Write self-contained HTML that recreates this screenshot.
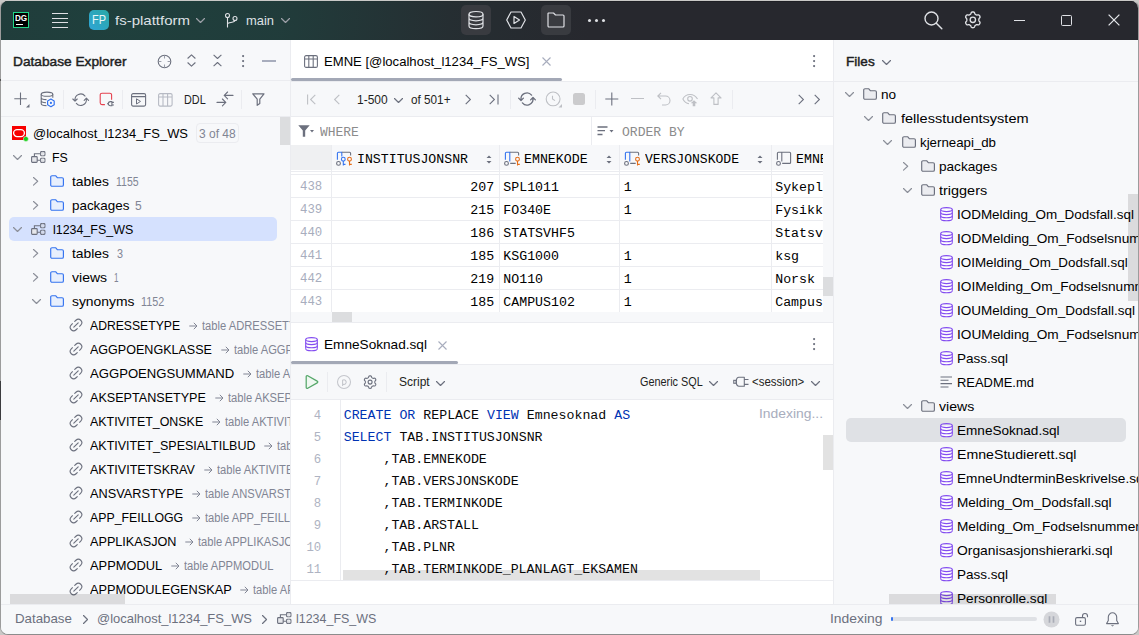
<!DOCTYPE html>
<html><head><meta charset="utf-8"><style>
html,body{margin:0;padding:0;width:1139px;height:635px;overflow:hidden;background:#c9c9c7;}
#root{position:relative;width:1139px;height:635px;overflow:hidden;}

</style></head><body><div id="root">
<div style="position:absolute;left:0;top:0;width:1139px;height:635px;box-sizing:border-box;border:1px solid #9c9c9c;border-top-color:#c9c9c7;border-bottom-color:#8c8c8c;border-radius:8px;background:#F7F8FA;overflow:hidden">
</div>
<div style="position:absolute;left:1px;top:1px;width:1137px;height:633px;border-radius:7px;overflow:hidden">
<div style="position:absolute;left:-1px;top:-1px;width:1139px;height:635px">
<div style="position:absolute;left:0px;top:0px;width:1139px;height:40px;background:#27282E;"></div>
<div style="position:absolute;left:0px;top:1px;width:1139px;height:1px;background:#1F2025;"></div>
<div style="position:absolute;left:0px;top:0px;width:1139px;height:40px;background:radial-gradient(ellipse 470px 260px at 120px 20px, rgba(31,64,61,1) 0%, rgba(32,62,60,0.9) 35%, rgba(36,52,54,0.5) 70%, rgba(39,40,46,0) 100%);"></div>
<div style="position:absolute;left:13px;top:12px;width:16px;height:16px;background:#000;box-sizing:border-box;border:1.5px solid #21D789"></div>
<span style='position:absolute;left:15.3px;top:14.02px;font-family:"Liberation Sans", sans-serif;font-size:8.6px;line-height:8.6px;font-weight:bold;white-space:pre;color:#fff;transform:scaleX(0.9464);transform-origin:0 0;'>DG</span>
<div style="position:absolute;left:16px;top:24px;width:6.5px;height:1.3px;background:#fff;"></div>
<div style="position:absolute;left:52px;top:13px;width:16px;height:1.3px;background:#DFE1E5;"></div>
<div style="position:absolute;left:52px;top:17.5px;width:16px;height:1.3px;background:#DFE1E5;"></div>
<div style="position:absolute;left:52px;top:22px;width:16px;height:1.3px;background:#DFE1E5;"></div>
<div style="position:absolute;left:52px;top:26.5px;width:16px;height:1.3px;background:#DFE1E5;"></div>
<div style="position:absolute;left:89px;top:10px;width:20px;height:20px;background:linear-gradient(45deg,#2fa5d6 0%,#29a8a6 100%);border-radius:5px"></div>
<span style='position:absolute;left:92px;top:14.16px;font-family:"Liberation Sans", sans-serif;font-size:12.8px;line-height:12.8px;font-weight:normal;white-space:pre;color:#EAF7F7;transform:scaleX(0.8558);transform-origin:0 0;'>FP</span>
<span style='position:absolute;left:115px;top:13.57px;font-family:"Liberation Sans", sans-serif;font-size:13.5px;line-height:13.5px;font-weight:normal;white-space:pre;color:#DFE1E5;transform:scaleX(1.1109);transform-origin:0 0;'>fs-plattform</span>
<svg style="position:absolute;left:196px;top:18px;overflow:visible;" width="9" height="5" viewBox="0 0 9 5" fill="none"><path d="M0.5 0.5 L4.5 4.5 L8.5 0.5" stroke="#9DA0A8" stroke-width="1.15" stroke-linecap="round" stroke-linejoin="round"/></svg>
<svg style="position:absolute;left:225px;top:13px;overflow:visible;" width="13" height="15" viewBox="0 0 13 15" fill="none"><circle cx="2.5" cy="2.5" r="2" stroke="#DFE1E5" stroke-width="1.1"/><circle cx="10" cy="5.5" r="2" stroke="#DFE1E5" stroke-width="1.1"/><path d="M2.5 4.5 V14.5 M2.5 11 C2.5 9 10 10 10 7.5" stroke="#DFE1E5" stroke-width="1.1"/></svg>
<span style='position:absolute;left:246px;top:13.57px;font-family:"Liberation Sans", sans-serif;font-size:13.5px;line-height:13.5px;font-weight:normal;white-space:pre;color:#DFE1E5;transform:scaleX(0.9568);transform-origin:0 0;'>main</span>
<svg style="position:absolute;left:281px;top:18px;overflow:visible;" width="9" height="5" viewBox="0 0 9 5" fill="none"><path d="M0.5 0.5 L4.5 4.5 L8.5 0.5" stroke="#9DA0A8" stroke-width="1.15" stroke-linecap="round" stroke-linejoin="round"/></svg>
<div style="position:absolute;left:461px;top:5px;width:30px;height:30px;background:#393B40;border-radius:5px"></div>
<div style="position:absolute;left:541px;top:5px;width:30px;height:30px;background:#393B40;border-radius:5px"></div>
<svg style="position:absolute;left:468px;top:11px;overflow:visible;" width="16" height="19" viewBox="0 0 16 19" fill="none"><ellipse cx="8" cy="3.2" rx="7" ry="2.7" stroke="#DFE1E5" stroke-width="1.2"/><path d="M1 3.2 V15 c0 1.5 3.1 2.7 7 2.7 s7 -1.2 7 -2.7 V3.2 M1 7.1 c0 1.5 3.1 2.7 7 2.7 s7 -1.2 7 -2.7 M1 11.1 c0 1.5 3.1 2.7 7 2.7 s7 -1.2 7 -2.7" stroke="#DFE1E5" stroke-width="1.2"/></svg>
<svg style="position:absolute;left:506px;top:11px;overflow:visible;" width="20" height="18" viewBox="0 0 20 18" fill="none"><path d="M5 1 H15 L19.3 9 L15 17 H5 L0.7 9 Z" stroke="#DFE1E5" stroke-width="1.2" stroke-linejoin="round"/><path d="M8 5.5 V12.5 L13.5 9 Z" stroke="#DFE1E5" stroke-width="1.2" stroke-linejoin="round"/></svg>
<svg style="position:absolute;left:547px;top:12px;overflow:visible;" width="18" height="16" viewBox="0 0 18 16" fill="none"><path d="M1.5 1 H6.5 L8.5 3 H16 a1 1 0 0 1 1 1 V14 a1 1 0 0 1 -1 1 H2 a1 1 0 0 1 -1 -1 V1.5z" stroke="#DFE1E5" stroke-width="1.2" stroke-linejoin="round"/></svg>
<svg style="position:absolute;left:587.5px;top:18.5px;overflow:visible;" width="3" height="3" viewBox="0 0 3 3" fill="none"><circle cx="1.5" cy="1.5" r="1.5" fill="#DFE1E5"/></svg>
<svg style="position:absolute;left:594.5px;top:18.5px;overflow:visible;" width="3" height="3" viewBox="0 0 3 3" fill="none"><circle cx="1.5" cy="1.5" r="1.5" fill="#DFE1E5"/></svg>
<svg style="position:absolute;left:601.5px;top:18.5px;overflow:visible;" width="3" height="3" viewBox="0 0 3 3" fill="none"><circle cx="1.5" cy="1.5" r="1.5" fill="#DFE1E5"/></svg>
<svg style="position:absolute;left:924px;top:11px;overflow:visible;" width="19" height="19" viewBox="0 0 19 19" fill="none"><circle cx="7.5" cy="7.5" r="6.5" stroke="#DFE1E5" stroke-width="1.4"/><path d="M12.3 12.3 L17.8 17.8" stroke="#DFE1E5" stroke-width="1.5" stroke-linecap="round"/></svg>
<svg style="position:absolute;left:962.15px;top:9.35px;overflow:visible;" width="21.7" height="21.7" viewBox="0 0 21.7 21.7" fill="none"><path d="M16.85 10.85 L16.87 11.24 L16.93 11.65 L17.06 12.09 L17.56 12.65 L18.02 13.28 L18.02 13.82 L17.91 14.33 L17.69 14.80 L17.39 15.22 L17.01 15.58 L16.54 15.84 L15.76 15.76 L15.03 15.61 L14.59 15.72 L14.20 15.87 L13.85 16.05 L13.52 16.26 L13.20 16.52 L12.89 16.85 L12.65 17.56 L12.33 18.27 L11.86 18.55 L11.36 18.70 L10.85 18.75 L10.34 18.70 L9.84 18.55 L9.37 18.27 L9.05 17.56 L8.81 16.85 L8.50 16.52 L8.18 16.26 L7.85 16.05 L7.50 15.87 L7.11 15.72 L6.67 15.61 L5.94 15.76 L5.16 15.84 L4.69 15.58 L4.31 15.22 L4.01 14.80 L3.79 14.33 L3.68 13.82 L3.68 13.28 L4.14 12.65 L4.64 12.09 L4.77 11.65 L4.83 11.24 L4.85 10.85 L4.83 10.46 L4.77 10.05 L4.64 9.61 L4.14 9.05 L3.68 8.42 L3.68 7.88 L3.79 7.37 L4.01 6.90 L4.31 6.48 L4.69 6.12 L5.16 5.86 L5.94 5.94 L6.67 6.09 L7.11 5.98 L7.50 5.83 L7.85 5.65 L8.18 5.44 L8.50 5.18 L8.81 4.85 L9.05 4.14 L9.37 3.43 L9.84 3.15 L10.34 3.00 L10.85 2.95 L11.36 3.00 L11.86 3.15 L12.33 3.43 L12.65 4.14 L12.89 4.85 L13.20 5.18 L13.52 5.44 L13.85 5.65 L14.20 5.83 L14.59 5.98 L15.03 6.09 L15.76 5.94 L16.54 5.86 L17.01 6.12 L17.39 6.48 L17.69 6.90 L17.91 7.37 L18.02 7.88 L18.02 8.42 L17.56 9.05 L17.06 9.61 L16.93 10.05 L16.87 10.46Z" stroke="#DFE1E5" stroke-width="1.35" stroke-linejoin="round"/><circle cx="10.85" cy="10.85" r="2.7" stroke="#DFE1E5" stroke-width="1.35"/></svg>
<div style="position:absolute;left:1014px;top:19.5px;width:11px;height:1.2px;background:#DFE1E5;"></div>
<div style="position:absolute;left:1061px;top:14.5px;width:11px;height:11px;background:transparent;box-sizing:border-box;border:1.3px solid #DFE1E5;border-radius:1.5px"></div>
<svg style="position:absolute;left:1108px;top:14px;overflow:visible;" width="12" height="12" viewBox="0 0 12 12" fill="none"><path d="M0.6 0.6 L11.4 11.4 M11.4 0.6 L0.6 11.4" stroke="#DFE1E5" stroke-width="1.3"/></svg>
<div style="position:absolute;left:0px;top:40px;width:290px;height:564px;background:#F7F8FA;"></div>
<div style="position:absolute;left:290px;top:40px;width:1px;height:564px;background:#EBECF0;"></div>
<span style='position:absolute;left:13px;top:54.99px;font-family:"Liberation Sans", sans-serif;font-size:13px;line-height:13px;font-weight:normal;white-space:pre;color:#1E1F22;transform:scaleX(1.0541);transform-origin:0 0;-webkit-text-stroke:0.45px #1E1F22'>Database Explorer</span>
<svg style="position:absolute;left:157px;top:54px;overflow:visible;" width="15" height="15" viewBox="0 0 15 15" fill="none"><circle cx="7.5" cy="7.5" r="6.3" stroke="#6C707E" stroke-width="1.1"/><path d="M7.5 1.8 V4.4 M7.5 10.6 V13.2 M1.8 7.5 H4.4 M10.6 7.5 H13.2" stroke="#9A9EAA" stroke-width="1.1"/></svg>
<svg style="position:absolute;left:187px;top:54px;overflow:visible;" width="9" height="13" viewBox="0 0 9 13" fill="none"><path d="M0.6 4.5 L4.5 0.8 L8.4 4.5 M0.6 8.5 L4.5 12.2 L8.4 8.5" stroke="#6C707E" stroke-width="1.1" stroke-linejoin="round"/></svg>
<svg style="position:absolute;left:213px;top:54px;overflow:visible;" width="9" height="13" viewBox="0 0 9 13" fill="none"><path d="M0.6 0.8 L4.5 4.5 L8.4 0.8 M0.6 12.2 L4.5 8.5 L8.4 12.2" stroke="#6C707E" stroke-width="1.1" stroke-linejoin="round"/></svg>
<svg style="position:absolute;left:241.5px;top:55px;overflow:visible;" width="2.2" height="2.2" viewBox="0 0 2.2 2.2" fill="none"><circle cx="1.1" cy="1.1" r="1.1" fill="#6C707E"/></svg>
<svg style="position:absolute;left:241.5px;top:60px;overflow:visible;" width="2.2" height="2.2" viewBox="0 0 2.2 2.2" fill="none"><circle cx="1.1" cy="1.1" r="1.1" fill="#6C707E"/></svg>
<svg style="position:absolute;left:241.5px;top:65px;overflow:visible;" width="2.2" height="2.2" viewBox="0 0 2.2 2.2" fill="none"><circle cx="1.1" cy="1.1" r="1.1" fill="#6C707E"/></svg>
<div style="position:absolute;left:262px;top:60.2px;width:13.5px;height:1.5px;background:#A8ADBD;"></div>
<div style="position:absolute;left:0px;top:80px;width:290px;height:1px;background:#EBECF0;"></div>
<svg style="position:absolute;left:14px;top:92px;overflow:visible;" width="16" height="16" viewBox="0 0 16 16" fill="none"><path d="M6.5 0.5 V13 M0.3 6.7 H12.8" stroke="#6C707E" stroke-width="1.1"/><path d="M15.5 12 V15.5 H12 Z" fill="#6C707E"/></svg>
<svg style="position:absolute;left:40px;top:91px;overflow:visible;" width="16" height="16" viewBox="0 0 16 16" fill="none"><ellipse cx="7" cy="3.2" rx="5.8" ry="2.1" stroke="#6C707E" stroke-width="1.1"/><path d="M1.2 3.2 V12.4 c0 1.2 2.4 2.1 5.3 2.2 M12.8 3.2 V6.8 M1.2 6.4 c0 1.2 2.4 2.1 5.3 2.2 M1.2 9.5 c0 1.2 2.4 2.1 4.8 2.2" stroke="#6C707E" stroke-width="1.1"/><path d="M10.9 8.1 L14.2 10 V13.8 L10.9 15.7 L7.6 13.8 V10 Z" fill="#F7F8FA" stroke="#3574F0" stroke-width="1.2" stroke-linejoin="round"/><circle cx="10.9" cy="11.9" r="1.1" fill="#3574F0"/></svg>
<div style="position:absolute;left:63px;top:90px;width:1px;height:19px;background:#EBECF0;"></div>
<svg style="position:absolute;left:70.5px;top:89.5px;overflow:visible;" width="19.4" height="19.4" viewBox="0 0 19.4 19.4" fill="none"><path d="M4.02 10.20 A5.7 5.7 0 0 1 14.07 6.04 M15.38 9.20 A5.7 5.7 0 0 1 5.33 13.36 M1.82 9.00 L4.02 11.20 L6.22 9.00 M13.18 10.40 L15.38 8.20 L17.58 10.40" stroke="#6C707E" stroke-width="1.1" stroke-linecap="round" stroke-linejoin="round"/></svg>
<svg style="position:absolute;left:99px;top:92px;overflow:visible;" width="17" height="16" viewBox="0 0 17 16" fill="none"><path d="M12.6 7.8 V3 a1.8 1.8 0 0 0 -1.8 -1.8 H3 a1.8 1.8 0 0 0 -1.8 1.8 V10.8 a1.8 1.8 0 0 0 1.8 1.8 H5.9" stroke="#E5414F" stroke-width="1.1"/><path d="M12.9 9.6 H11.4 a2.1 2.1 0 0 0 0 4.2 H12.9 Z M8 11.7 H9.3 M12.9 10.4 H14.9 M12.9 13 H14.9" stroke="#6C707E" stroke-width="1.1" stroke-linejoin="round"/></svg>
<div style="position:absolute;left:122px;top:90px;width:1px;height:19px;background:#EBECF0;"></div>
<svg style="position:absolute;left:131px;top:93px;overflow:visible;" width="16" height="14" viewBox="0 0 16 14" fill="none"><rect x="0.6" y="0.6" width="14" height="12.5" rx="1.5" stroke="#6C707E" stroke-width="1.1"/><path d="M0.6 3.6 H14.6" stroke="#6C707E" stroke-width="1.1"/><path d="M5.5 5.8 V11 L9.5 8.4 Z" stroke="#6C707E" stroke-width="1" stroke-linejoin="round"/></svg>
<svg style="position:absolute;left:158px;top:93px;overflow:visible;" width="15" height="14" viewBox="0 0 15 14" fill="none"><rect x="0.6" y="0.6" width="13.5" height="12.5" rx="1.5" stroke="#B7BAC4" stroke-width="1.1"/><path d="M0.6 4 H14 M5 0.6 V13 M9.6 0.6 V13" stroke="#B7BAC4" stroke-width="1.1"/></svg>
<span style='position:absolute;left:184px;top:93.92px;font-family:"Liberation Sans", sans-serif;font-size:12.5px;line-height:12.5px;font-weight:normal;white-space:pre;color:#1E1F22;transform:scaleX(0.8675);transform-origin:0 0;'>DDL</span>
<svg style="position:absolute;left:216px;top:91px;overflow:visible;" width="18" height="16" viewBox="0 0 18 16" fill="none"><path d="M8.2 4.4 H17 M11.6 1 L8.2 4.4 L11.6 7.8 M1 11.4 H9.8 M6.4 8 L9.8 11.4 L6.4 14.8" stroke="#6C707E" stroke-width="1.1" stroke-linecap="round" stroke-linejoin="round"/></svg>
<div style="position:absolute;left:241px;top:90px;width:1px;height:19px;background:#EBECF0;"></div>
<svg style="position:absolute;left:251.5px;top:92.5px;overflow:visible;" width="13" height="13" viewBox="0 0 13 13" fill="none"><path d="M0.8 0.8 H12 L7.8 6.2 V10.5 L5.2 12.3 V6.2 Z" stroke="#6C707E" stroke-width="1.2" stroke-linejoin="round"/></svg>
<div style="position:absolute;left:0px;top:116px;width:290px;height:1px;background:#EBECF0;"></div>
<div style="position:absolute;left:0;top:0;width:1139px;height:635px;clip-path:inset(117px 849px 31px 0px)">
<div style="position:absolute;left:280px;top:117px;width:10px;height:28px;background:#DCDDDF;"></div>
<div style="position:absolute;left:12px;top:126px;width:14px;height:14px;background:#F80000;"></div>
<svg style="position:absolute;left:12px;top:126px;overflow:visible;" width="14" height="14" viewBox="0 0 14 14" fill="none"><rect x="1.6" y="3.6" width="10.8" height="7" rx="3.5" stroke="#fff" stroke-width="1.3"/></svg>
<svg style="position:absolute;left:22.5px;top:136.2px;overflow:visible;" width="6" height="6" viewBox="0 0 6 6" fill="none"><circle cx="2.9" cy="2.9" r="2.5" fill="#19CF19" stroke="#F7F8FA" stroke-width="0.5"/></svg>
<span style='position:absolute;left:33px;top:126.99px;font-family:"Liberation Sans", sans-serif;font-size:13px;line-height:13px;font-weight:normal;white-space:pre;color:#000000;transform:scaleX(0.9964);transform-origin:0 0;'>@localhost_l1234_FS_WS</span>
<div style="position:absolute;left:196px;top:123px;width:43px;height:20px;background:transparent;box-sizing:border-box;border:1px solid #EBECF0;border-radius:4px"></div>
<span style='position:absolute;left:198.6px;top:128.02px;font-family:"Liberation Sans", sans-serif;font-size:12.5px;line-height:12.5px;font-weight:normal;white-space:pre;color:#818594;transform:scaleX(0.9599);transform-origin:0 0;'>3 of 48</span>
<svg style="position:absolute;left:13px;top:154.8px;overflow:visible;" width="9" height="5" viewBox="0 0 9 5" fill="none"><path d="M0.5 0.5 L4.5 4.5 L8.5 0.5" stroke="#8C8F99" stroke-width="1.15" stroke-linecap="round" stroke-linejoin="round"/></svg>
<svg style="position:absolute;left:31px;top:151px;overflow:visible;" width="15" height="13" viewBox="0 0 15 13" fill="none"><rect x="0.6" y="5.6" width="5.6" height="5.8" rx="0.8" fill="#E6E7EB" stroke="#6C707E" stroke-width="1.1"/><rect x="9.6" y="0.6" width="4.3" height="4.2" rx="0.8" stroke="#6C707E" stroke-width="1.1"/><rect x="9.6" y="7.2" width="4.3" height="4.2" rx="0.8" stroke="#6C707E" stroke-width="1.1"/><path d="M11.75 0.6 V4.8 M9.6 2.7 H13.9 M11.75 7.2 V11.4 M9.6 9.3 H13.9" stroke="#D5D7DD" stroke-width="0.6"/><path d="M3.4 5.6 V2.7 H9.6 M6.2 9.3 H9.6" stroke="#6C707E" stroke-width="1.1"/></svg>
<span style='position:absolute;left:52px;top:150.99px;font-family:"Liberation Sans", sans-serif;font-size:13px;line-height:13px;font-weight:normal;white-space:pre;color:#000000;transform:scaleX(0.9504);transform-origin:0 0;'>FS</span>
<svg style="position:absolute;left:33.2px;top:176.6px;overflow:visible;" width="5.2" height="8.6" viewBox="0 0 5.2 8.6" fill="none"><path d="M0.5 0.5 L4.7 4.3 L0.5 8.1" stroke="#8C8F99" stroke-width="1.15" stroke-linecap="round" stroke-linejoin="round"/></svg>
<svg style="position:absolute;left:50px;top:175px;overflow:visible;" width="15" height="13" viewBox="0 0 15 13" fill="none"><path d="M0.7 2 a1.3 1.3 0 0 1 1.3 -1.3 H5.6 L7.3 2.7 H12.1 a1.3 1.3 0 0 1 1.3 1.3 V9.9 a1.3 1.3 0 0 1 -1.3 1.3 H2 a1.3 1.3 0 0 1 -1.3 -1.3 Z" fill="#E7EFFD" stroke="#3574F0" stroke-width="1.15" stroke-linejoin="round"/></svg>
<span style='position:absolute;left:71.6px;top:174.99px;font-family:"Liberation Sans", sans-serif;font-size:13px;line-height:13px;font-weight:normal;white-space:pre;color:#000000;transform:scaleX(1.0662);transform-origin:0 0;'>tables</span>
<span style='position:absolute;left:116.4px;top:176.22px;font-family:"Liberation Sans", sans-serif;font-size:12.5px;line-height:12.5px;font-weight:normal;white-space:pre;color:#818594;transform:scaleX(0.8404);transform-origin:0 0;'>1155</span>
<svg style="position:absolute;left:33.2px;top:200.6px;overflow:visible;" width="5.2" height="8.6" viewBox="0 0 5.2 8.6" fill="none"><path d="M0.5 0.5 L4.7 4.3 L0.5 8.1" stroke="#8C8F99" stroke-width="1.15" stroke-linecap="round" stroke-linejoin="round"/></svg>
<svg style="position:absolute;left:50px;top:199px;overflow:visible;" width="15" height="13" viewBox="0 0 15 13" fill="none"><path d="M0.7 2 a1.3 1.3 0 0 1 1.3 -1.3 H5.6 L7.3 2.7 H12.1 a1.3 1.3 0 0 1 1.3 1.3 V9.9 a1.3 1.3 0 0 1 -1.3 1.3 H2 a1.3 1.3 0 0 1 -1.3 -1.3 Z" fill="#E7EFFD" stroke="#3574F0" stroke-width="1.15" stroke-linejoin="round"/></svg>
<span style='position:absolute;left:71.6px;top:198.99px;font-family:"Liberation Sans", sans-serif;font-size:13px;line-height:13px;font-weight:normal;white-space:pre;color:#000000;transform:scaleX(1.0313);transform-origin:0 0;'>packages</span>
<span style='position:absolute;left:134.8px;top:200.22px;font-family:"Liberation Sans", sans-serif;font-size:12.5px;line-height:12.5px;font-weight:normal;white-space:pre;color:#818594;transform:scaleX(0.9636);transform-origin:0 0;'>5</span>
<div style="position:absolute;left:9px;top:217px;width:268px;height:24px;background:#D5E1FE;border-radius:5px"></div>
<svg style="position:absolute;left:13px;top:226.8px;overflow:visible;" width="9" height="5" viewBox="0 0 9 5" fill="none"><path d="M0.5 0.5 L4.5 4.5 L8.5 0.5" stroke="#8C8F99" stroke-width="1.15" stroke-linecap="round" stroke-linejoin="round"/></svg>
<svg style="position:absolute;left:31px;top:223px;overflow:visible;" width="15" height="13" viewBox="0 0 15 13" fill="none"><rect x="0.6" y="5.6" width="5.6" height="5.8" rx="0.8" fill="#E6E7EB" stroke="#6C707E" stroke-width="1.1"/><rect x="9.6" y="0.6" width="4.3" height="4.2" rx="0.8" stroke="#6C707E" stroke-width="1.1"/><rect x="9.6" y="7.2" width="4.3" height="4.2" rx="0.8" stroke="#6C707E" stroke-width="1.1"/><path d="M11.75 0.6 V4.8 M9.6 2.7 H13.9 M11.75 7.2 V11.4 M9.6 9.3 H13.9" stroke="#D5D7DD" stroke-width="0.6"/><path d="M3.4 5.6 V2.7 H9.6 M6.2 9.3 H9.6" stroke="#6C707E" stroke-width="1.1"/></svg>
<span style='position:absolute;left:52.8px;top:222.99px;font-family:"Liberation Sans", sans-serif;font-size:13px;line-height:13px;font-weight:normal;white-space:pre;color:#000000;transform:scaleX(0.9567);transform-origin:0 0;'>l1234_FS_WS</span>
<svg style="position:absolute;left:33.2px;top:248.6px;overflow:visible;" width="5.2" height="8.6" viewBox="0 0 5.2 8.6" fill="none"><path d="M0.5 0.5 L4.7 4.3 L0.5 8.1" stroke="#8C8F99" stroke-width="1.15" stroke-linecap="round" stroke-linejoin="round"/></svg>
<svg style="position:absolute;left:50px;top:247px;overflow:visible;" width="15" height="13" viewBox="0 0 15 13" fill="none"><path d="M0.7 2 a1.3 1.3 0 0 1 1.3 -1.3 H5.6 L7.3 2.7 H12.1 a1.3 1.3 0 0 1 1.3 1.3 V9.9 a1.3 1.3 0 0 1 -1.3 1.3 H2 a1.3 1.3 0 0 1 -1.3 -1.3 Z" fill="#E7EFFD" stroke="#3574F0" stroke-width="1.15" stroke-linejoin="round"/></svg>
<span style='position:absolute;left:71.6px;top:246.99px;font-family:"Liberation Sans", sans-serif;font-size:13px;line-height:13px;font-weight:normal;white-space:pre;color:#000000;transform:scaleX(1.0662);transform-origin:0 0;'>tables</span>
<span style='position:absolute;left:116.6px;top:248.22px;font-family:"Liberation Sans", sans-serif;font-size:12.5px;line-height:12.5px;font-weight:normal;white-space:pre;color:#818594;transform:scaleX(0.8629);transform-origin:0 0;'>3</span>
<svg style="position:absolute;left:33.2px;top:272.6px;overflow:visible;" width="5.2" height="8.6" viewBox="0 0 5.2 8.6" fill="none"><path d="M0.5 0.5 L4.7 4.3 L0.5 8.1" stroke="#8C8F99" stroke-width="1.15" stroke-linecap="round" stroke-linejoin="round"/></svg>
<svg style="position:absolute;left:50px;top:271px;overflow:visible;" width="15" height="13" viewBox="0 0 15 13" fill="none"><path d="M0.7 2 a1.3 1.3 0 0 1 1.3 -1.3 H5.6 L7.3 2.7 H12.1 a1.3 1.3 0 0 1 1.3 1.3 V9.9 a1.3 1.3 0 0 1 -1.3 1.3 H2 a1.3 1.3 0 0 1 -1.3 -1.3 Z" fill="#E7EFFD" stroke="#3574F0" stroke-width="1.15" stroke-linejoin="round"/></svg>
<span style='position:absolute;left:71.6px;top:270.99px;font-family:"Liberation Sans", sans-serif;font-size:13px;line-height:13px;font-weight:normal;white-space:pre;color:#000000;transform:scaleX(1.0795);transform-origin:0 0;'>views</span>
<span style='position:absolute;left:114px;top:272.22px;font-family:"Liberation Sans", sans-serif;font-size:12.5px;line-height:12.5px;font-weight:normal;white-space:pre;color:#818594;transform:scaleX(0.6472);transform-origin:0 0;'>1</span>
<svg style="position:absolute;left:32.4px;top:298.5px;overflow:visible;" width="9" height="5" viewBox="0 0 9 5" fill="none"><path d="M0.5 0.5 L4.5 4.5 L8.5 0.5" stroke="#8C8F99" stroke-width="1.15" stroke-linecap="round" stroke-linejoin="round"/></svg>
<svg style="position:absolute;left:50px;top:295px;overflow:visible;" width="15" height="13" viewBox="0 0 15 13" fill="none"><path d="M0.7 2 a1.3 1.3 0 0 1 1.3 -1.3 H5.6 L7.3 2.7 H12.1 a1.3 1.3 0 0 1 1.3 1.3 V9.9 a1.3 1.3 0 0 1 -1.3 1.3 H2 a1.3 1.3 0 0 1 -1.3 -1.3 Z" fill="#E7EFFD" stroke="#3574F0" stroke-width="1.15" stroke-linejoin="round"/></svg>
<span style='position:absolute;left:71.6px;top:294.99px;font-family:"Liberation Sans", sans-serif;font-size:13px;line-height:13px;font-weight:normal;white-space:pre;color:#000000;transform:scaleX(1.0661);transform-origin:0 0;'>synonyms</span>
<span style='position:absolute;left:141.1px;top:296.22px;font-family:"Liberation Sans", sans-serif;font-size:12.5px;line-height:12.5px;font-weight:normal;white-space:pre;color:#818594;transform:scaleX(0.8628);transform-origin:0 0;'>1152</span>
<svg style="position:absolute;left:67.05px;top:316.1px;overflow:visible;" width="18" height="18" viewBox="0 0 18 18" fill="none"><g transform="translate(9 9) rotate(-45)"><path d="M1.6 -3.4 H3.3 A3.4 3.4 0 0 1 3.3 3.4 H1.6 M-1.6 3.4 H-3.3 A3.4 3.4 0 0 1 -3.3 -3.4 H-1.6 M-3.1 0 H3.1" stroke="#6C707E" stroke-width="1.1" stroke-linecap="round"/></g></svg>
<span style='position:absolute;left:90.2px;top:318.99px;font-family:"Liberation Sans", sans-serif;font-size:13px;line-height:13px;font-weight:normal;white-space:pre;color:#000000;transform:scaleX(0.9376);transform-origin:0 0;'>ADRESSETYPE</span>
<svg style="position:absolute;left:189.1px;top:321.5px;overflow:visible;" width="9" height="8" viewBox="0 0 9 8" fill="none"><path d="M0.3 4 H8 M4.8 0.8 L8 4 L4.8 7.2" stroke="#818594" stroke-width="1"/></svg>
<span style='position:absolute;left:202.3px;top:319.84px;font-family:"Liberation Sans", sans-serif;font-size:12px;line-height:12px;font-weight:normal;white-space:pre;color:#818594;transform:scaleX(0.931);transform-origin:0 0;'>table ADRESSETYPE</span>
<svg style="position:absolute;left:67.05px;top:340.1px;overflow:visible;" width="18" height="18" viewBox="0 0 18 18" fill="none"><g transform="translate(9 9) rotate(-45)"><path d="M1.6 -3.4 H3.3 A3.4 3.4 0 0 1 3.3 3.4 H1.6 M-1.6 3.4 H-3.3 A3.4 3.4 0 0 1 -3.3 -3.4 H-1.6 M-3.1 0 H3.1" stroke="#6C707E" stroke-width="1.1" stroke-linecap="round"/></g></svg>
<span style='position:absolute;left:90.2px;top:342.99px;font-family:"Liberation Sans", sans-serif;font-size:13px;line-height:13px;font-weight:normal;white-space:pre;color:#000000;transform:scaleX(0.9641);transform-origin:0 0;'>AGGPOENGKLASSE</span>
<svg style="position:absolute;left:221.2px;top:345.5px;overflow:visible;" width="9" height="8" viewBox="0 0 9 8" fill="none"><path d="M0.3 4 H8 M4.8 0.8 L8 4 L4.8 7.2" stroke="#818594" stroke-width="1"/></svg>
<span style='position:absolute;left:233.9px;top:343.84px;font-family:"Liberation Sans", sans-serif;font-size:12px;line-height:12px;font-weight:normal;white-space:pre;color:#818594;transform:scaleX(0.931);transform-origin:0 0;'>table AGGPOENGKLASSE</span>
<svg style="position:absolute;left:67.05px;top:364.1px;overflow:visible;" width="18" height="18" viewBox="0 0 18 18" fill="none"><g transform="translate(9 9) rotate(-45)"><path d="M1.6 -3.4 H3.3 A3.4 3.4 0 0 1 3.3 3.4 H1.6 M-1.6 3.4 H-3.3 A3.4 3.4 0 0 1 -3.3 -3.4 H-1.6 M-3.1 0 H3.1" stroke="#6C707E" stroke-width="1.1" stroke-linecap="round"/></g></svg>
<span style='position:absolute;left:90.2px;top:366.99px;font-family:"Liberation Sans", sans-serif;font-size:13px;line-height:13px;font-weight:normal;white-space:pre;color:#000000;transform:scaleX(1.0090);transform-origin:0 0;'>AGGPOENGSUMMAND</span>
<svg style="position:absolute;left:242.8px;top:369.5px;overflow:visible;" width="9" height="8" viewBox="0 0 9 8" fill="none"><path d="M0.3 4 H8 M4.8 0.8 L8 4 L4.8 7.2" stroke="#818594" stroke-width="1"/></svg>
<span style='position:absolute;left:256px;top:367.84px;font-family:"Liberation Sans", sans-serif;font-size:12px;line-height:12px;font-weight:normal;white-space:pre;color:#818594;transform:scaleX(0.931);transform-origin:0 0;'>table AGGPOENGSUMMAND</span>
<svg style="position:absolute;left:67.05px;top:388.1px;overflow:visible;" width="18" height="18" viewBox="0 0 18 18" fill="none"><g transform="translate(9 9) rotate(-45)"><path d="M1.6 -3.4 H3.3 A3.4 3.4 0 0 1 3.3 3.4 H1.6 M-1.6 3.4 H-3.3 A3.4 3.4 0 0 1 -3.3 -3.4 H-1.6 M-3.1 0 H3.1" stroke="#6C707E" stroke-width="1.1" stroke-linecap="round"/></g></svg>
<span style='position:absolute;left:90.2px;top:390.99px;font-family:"Liberation Sans", sans-serif;font-size:13px;line-height:13px;font-weight:normal;white-space:pre;color:#000000;transform:scaleX(0.9684);transform-origin:0 0;'>AKSEPTANSETYPE</span>
<svg style="position:absolute;left:214.6px;top:393.5px;overflow:visible;" width="9" height="8" viewBox="0 0 9 8" fill="none"><path d="M0.3 4 H8 M4.8 0.8 L8 4 L4.8 7.2" stroke="#818594" stroke-width="1"/></svg>
<span style='position:absolute;left:227.8px;top:391.84px;font-family:"Liberation Sans", sans-serif;font-size:12px;line-height:12px;font-weight:normal;white-space:pre;color:#818594;transform:scaleX(0.931);transform-origin:0 0;'>table AKSEPTANSETYPE</span>
<svg style="position:absolute;left:67.05px;top:412.1px;overflow:visible;" width="18" height="18" viewBox="0 0 18 18" fill="none"><g transform="translate(9 9) rotate(-45)"><path d="M1.6 -3.4 H3.3 A3.4 3.4 0 0 1 3.3 3.4 H1.6 M-1.6 3.4 H-3.3 A3.4 3.4 0 0 1 -3.3 -3.4 H-1.6 M-3.1 0 H3.1" stroke="#6C707E" stroke-width="1.1" stroke-linecap="round"/></g></svg>
<span style='position:absolute;left:90.2px;top:414.99px;font-family:"Liberation Sans", sans-serif;font-size:13px;line-height:13px;font-weight:normal;white-space:pre;color:#000000;transform:scaleX(0.9554);transform-origin:0 0;'>AKTIVITET_ONSKE</span>
<svg style="position:absolute;left:212px;top:417.5px;overflow:visible;" width="9" height="8" viewBox="0 0 9 8" fill="none"><path d="M0.3 4 H8 M4.8 0.8 L8 4 L4.8 7.2" stroke="#818594" stroke-width="1"/></svg>
<span style='position:absolute;left:225.2px;top:415.84px;font-family:"Liberation Sans", sans-serif;font-size:12px;line-height:12px;font-weight:normal;white-space:pre;color:#818594;transform:scaleX(0.931);transform-origin:0 0;'>table AKTIVITET_ONSKE</span>
<svg style="position:absolute;left:67.05px;top:436.1px;overflow:visible;" width="18" height="18" viewBox="0 0 18 18" fill="none"><g transform="translate(9 9) rotate(-45)"><path d="M1.6 -3.4 H3.3 A3.4 3.4 0 0 1 3.3 3.4 H1.6 M-1.6 3.4 H-3.3 A3.4 3.4 0 0 1 -3.3 -3.4 H-1.6 M-3.1 0 H3.1" stroke="#6C707E" stroke-width="1.1" stroke-linecap="round"/></g></svg>
<span style='position:absolute;left:90.2px;top:438.99px;font-family:"Liberation Sans", sans-serif;font-size:13px;line-height:13px;font-weight:normal;white-space:pre;color:#000000;transform:scaleX(0.9593);transform-origin:0 0;'>AKTIVITET_SPESIALTILBUD</span>
<svg style="position:absolute;left:264.2px;top:441.5px;overflow:visible;" width="9" height="8" viewBox="0 0 9 8" fill="none"><path d="M0.3 4 H8 M4.8 0.8 L8 4 L4.8 7.2" stroke="#818594" stroke-width="1"/></svg>
<span style='position:absolute;left:276.5px;top:439.84px;font-family:"Liberation Sans", sans-serif;font-size:12px;line-height:12px;font-weight:normal;white-space:pre;color:#818594;transform:scaleX(0.931);transform-origin:0 0;'>table AKTIVITET_SPESIALTILBUD</span>
<svg style="position:absolute;left:67.05px;top:460.1px;overflow:visible;" width="18" height="18" viewBox="0 0 18 18" fill="none"><g transform="translate(9 9) rotate(-45)"><path d="M1.6 -3.4 H3.3 A3.4 3.4 0 0 1 3.3 3.4 H1.6 M-1.6 3.4 H-3.3 A3.4 3.4 0 0 1 -3.3 -3.4 H-1.6 M-3.1 0 H3.1" stroke="#6C707E" stroke-width="1.1" stroke-linecap="round"/></g></svg>
<span style='position:absolute;left:90.2px;top:462.99px;font-family:"Liberation Sans", sans-serif;font-size:13px;line-height:13px;font-weight:normal;white-space:pre;color:#000000;transform:scaleX(0.9638);transform-origin:0 0;'>AKTIVITETSKRAV</span>
<svg style="position:absolute;left:203.9px;top:465.5px;overflow:visible;" width="9" height="8" viewBox="0 0 9 8" fill="none"><path d="M0.3 4 H8 M4.8 0.8 L8 4 L4.8 7.2" stroke="#818594" stroke-width="1"/></svg>
<span style='position:absolute;left:217px;top:463.84px;font-family:"Liberation Sans", sans-serif;font-size:12px;line-height:12px;font-weight:normal;white-space:pre;color:#818594;transform:scaleX(0.931);transform-origin:0 0;'>table AKTIVITETSKRAV</span>
<svg style="position:absolute;left:67.05px;top:484.1px;overflow:visible;" width="18" height="18" viewBox="0 0 18 18" fill="none"><g transform="translate(9 9) rotate(-45)"><path d="M1.6 -3.4 H3.3 A3.4 3.4 0 0 1 3.3 3.4 H1.6 M-1.6 3.4 H-3.3 A3.4 3.4 0 0 1 -3.3 -3.4 H-1.6 M-3.1 0 H3.1" stroke="#6C707E" stroke-width="1.1" stroke-linecap="round"/></g></svg>
<span style='position:absolute;left:90.2px;top:486.99px;font-family:"Liberation Sans", sans-serif;font-size:13px;line-height:13px;font-weight:normal;white-space:pre;color:#000000;transform:scaleX(0.9798);transform-origin:0 0;'>ANSVARSTYPE</span>
<svg style="position:absolute;left:192.3px;top:489.5px;overflow:visible;" width="9" height="8" viewBox="0 0 9 8" fill="none"><path d="M0.3 4 H8 M4.8 0.8 L8 4 L4.8 7.2" stroke="#818594" stroke-width="1"/></svg>
<span style='position:absolute;left:205.4px;top:487.84px;font-family:"Liberation Sans", sans-serif;font-size:12px;line-height:12px;font-weight:normal;white-space:pre;color:#818594;transform:scaleX(0.931);transform-origin:0 0;'>table ANSVARSTYPE</span>
<svg style="position:absolute;left:67.05px;top:508.1px;overflow:visible;" width="18" height="18" viewBox="0 0 18 18" fill="none"><g transform="translate(9 9) rotate(-45)"><path d="M1.6 -3.4 H3.3 A3.4 3.4 0 0 1 3.3 3.4 H1.6 M-1.6 3.4 H-3.3 A3.4 3.4 0 0 1 -3.3 -3.4 H-1.6 M-3.1 0 H3.1" stroke="#6C707E" stroke-width="1.1" stroke-linecap="round"/></g></svg>
<span style='position:absolute;left:90.2px;top:510.99px;font-family:"Liberation Sans", sans-serif;font-size:13px;line-height:13px;font-weight:normal;white-space:pre;color:#000000;transform:scaleX(0.9484);transform-origin:0 0;'>APP_FEILLOGG</span>
<svg style="position:absolute;left:192.3px;top:513.5px;overflow:visible;" width="9" height="8" viewBox="0 0 9 8" fill="none"><path d="M0.3 4 H8 M4.8 0.8 L8 4 L4.8 7.2" stroke="#818594" stroke-width="1"/></svg>
<span style='position:absolute;left:205.4px;top:511.84px;font-family:"Liberation Sans", sans-serif;font-size:12px;line-height:12px;font-weight:normal;white-space:pre;color:#818594;transform:scaleX(0.931);transform-origin:0 0;'>table APP_FEILLOGG</span>
<svg style="position:absolute;left:67.05px;top:532.1px;overflow:visible;" width="18" height="18" viewBox="0 0 18 18" fill="none"><g transform="translate(9 9) rotate(-45)"><path d="M1.6 -3.4 H3.3 A3.4 3.4 0 0 1 3.3 3.4 H1.6 M-1.6 3.4 H-3.3 A3.4 3.4 0 0 1 -3.3 -3.4 H-1.6 M-3.1 0 H3.1" stroke="#6C707E" stroke-width="1.1" stroke-linecap="round"/></g></svg>
<span style='position:absolute;left:90.2px;top:534.99px;font-family:"Liberation Sans", sans-serif;font-size:13px;line-height:13px;font-weight:normal;white-space:pre;color:#000000;transform:scaleX(0.9733);transform-origin:0 0;'>APPLIKASJON</span>
<svg style="position:absolute;left:185px;top:537.5px;overflow:visible;" width="9" height="8" viewBox="0 0 9 8" fill="none"><path d="M0.3 4 H8 M4.8 0.8 L8 4 L4.8 7.2" stroke="#818594" stroke-width="1"/></svg>
<span style='position:absolute;left:198px;top:535.84px;font-family:"Liberation Sans", sans-serif;font-size:12px;line-height:12px;font-weight:normal;white-space:pre;color:#818594;transform:scaleX(0.931);transform-origin:0 0;'>table APPLIKASJON</span>
<svg style="position:absolute;left:67.05px;top:556.1px;overflow:visible;" width="18" height="18" viewBox="0 0 18 18" fill="none"><g transform="translate(9 9) rotate(-45)"><path d="M1.6 -3.4 H3.3 A3.4 3.4 0 0 1 3.3 3.4 H1.6 M-1.6 3.4 H-3.3 A3.4 3.4 0 0 1 -3.3 -3.4 H-1.6 M-3.1 0 H3.1" stroke="#6C707E" stroke-width="1.1" stroke-linecap="round"/></g></svg>
<span style='position:absolute;left:90.2px;top:558.99px;font-family:"Liberation Sans", sans-serif;font-size:13px;line-height:13px;font-weight:normal;white-space:pre;color:#000000;transform:scaleX(0.9895);transform-origin:0 0;'>APPMODUL</span>
<svg style="position:absolute;left:171.3px;top:561.5px;overflow:visible;" width="9" height="8" viewBox="0 0 9 8" fill="none"><path d="M0.3 4 H8 M4.8 0.8 L8 4 L4.8 7.2" stroke="#818594" stroke-width="1"/></svg>
<span style='position:absolute;left:184.4px;top:559.84px;font-family:"Liberation Sans", sans-serif;font-size:12px;line-height:12px;font-weight:normal;white-space:pre;color:#818594;transform:scaleX(0.931);transform-origin:0 0;'>table APPMODUL</span>
<svg style="position:absolute;left:67.05px;top:580.1px;overflow:visible;" width="18" height="18" viewBox="0 0 18 18" fill="none"><g transform="translate(9 9) rotate(-45)"><path d="M1.6 -3.4 H3.3 A3.4 3.4 0 0 1 3.3 3.4 H1.6 M-1.6 3.4 H-3.3 A3.4 3.4 0 0 1 -3.3 -3.4 H-1.6 M-3.1 0 H3.1" stroke="#6C707E" stroke-width="1.1" stroke-linecap="round"/></g></svg>
<span style='position:absolute;left:90.2px;top:582.99px;font-family:"Liberation Sans", sans-serif;font-size:13px;line-height:13px;font-weight:normal;white-space:pre;color:#000000;transform:scaleX(0.9820);transform-origin:0 0;'>APPMODULEGENSKAP</span>
<svg style="position:absolute;left:240.3px;top:585.5px;overflow:visible;" width="9" height="8" viewBox="0 0 9 8" fill="none"><path d="M0.3 4 H8 M4.8 0.8 L8 4 L4.8 7.2" stroke="#818594" stroke-width="1"/></svg>
<span style='position:absolute;left:253.4px;top:583.84px;font-family:"Liberation Sans", sans-serif;font-size:12px;line-height:12px;font-weight:normal;white-space:pre;color:#818594;transform:scaleX(0.931);transform-origin:0 0;'>table APPMODULEGENSKAP</span>
<div style="position:absolute;left:10px;top:594px;width:115px;height:10px;background:rgba(0,0,0,0.115);"></div>
</div>
<div style="position:absolute;left:291px;top:40px;width:542px;height:564px;background:#FFFFFF;"></div>
<svg style="position:absolute;left:304px;top:55px;overflow:visible;" width="14" height="13" viewBox="0 0 14 13" fill="none"><rect x="0.6" y="0.6" width="12.8" height="11.8" rx="1.5" stroke="#6C707E" stroke-width="1.1"/><path d="M0.6 4 H13.4 M4.8 0.6 V12.4 M9.2 0.6 V12.4" stroke="#6C707E" stroke-width="1.1"/></svg>
<span style='position:absolute;left:324.2px;top:54.99px;font-family:"Liberation Sans", sans-serif;font-size:13px;line-height:13px;font-weight:normal;white-space:pre;color:#000000;transform:scaleX(1.0076);transform-origin:0 0;'>EMNE [@localhost_l1234_FS_WS]</span>
<svg style="position:absolute;left:542px;top:57px;overflow:visible;" width="9" height="9" viewBox="0 0 9 9" fill="none"><path d="M0.5 0.5 L8.5 8.5 M8.5 0.5 L0.5 8.5" stroke="#A8ADBD" stroke-width="1.1"/></svg>
<div style="position:absolute;left:291px;top:78px;width:271px;height:3px;background:#A3A8B6;border-radius:1.5px"></div>
<svg style="position:absolute;left:813px;top:55px;overflow:visible;" width="2.2" height="2.2" viewBox="0 0 2.2 2.2" fill="none"><circle cx="1.1" cy="1.1" r="1.1" fill="#6C707E"/></svg>
<svg style="position:absolute;left:813px;top:60px;overflow:visible;" width="2.2" height="2.2" viewBox="0 0 2.2 2.2" fill="none"><circle cx="1.1" cy="1.1" r="1.1" fill="#6C707E"/></svg>
<svg style="position:absolute;left:813px;top:65px;overflow:visible;" width="2.2" height="2.2" viewBox="0 0 2.2 2.2" fill="none"><circle cx="1.1" cy="1.1" r="1.1" fill="#6C707E"/></svg>
<div style="position:absolute;left:291px;top:81px;width:542px;height:1px;background:#EBECF0;"></div>
<div style="position:absolute;left:291px;top:82px;width:542px;height:34px;background:#F7F8FA;"></div>
<div style="position:absolute;left:291px;top:116px;width:542px;height:1px;background:#EBECF0;"></div>
<svg style="position:absolute;left:307px;top:94px;overflow:visible;" width="9" height="11" viewBox="0 0 9 11" fill="none"><path d="M0.6 0.5 V10.5 M8.3 0.8 L3.6 5.5 L8.3 10.2" stroke="#BEC0C5" stroke-width="1.1"/></svg>
<svg style="position:absolute;left:334px;top:94px;overflow:visible;" width="6" height="11" viewBox="0 0 6 11" fill="none"><path d="M5.3 0.8 L0.6 5.5 L5.3 10.2" stroke="#BEC0C5" stroke-width="1.1"/></svg>
<span style='position:absolute;left:356.8px;top:92.99px;font-family:"Liberation Sans", sans-serif;font-size:13px;line-height:13px;font-weight:normal;white-space:pre;color:#1E1F22;transform:scaleX(0.9233);transform-origin:0 0;'>1-500</span>
<svg style="position:absolute;left:394px;top:97.5px;overflow:visible;" width="9" height="5" viewBox="0 0 9 5" fill="none"><path d="M0.5 0.5 L4.5 4.5 L8.5 0.5" stroke="#6C707E" stroke-width="1.15" stroke-linecap="round" stroke-linejoin="round"/></svg>
<span style='position:absolute;left:411.2px;top:92.99px;font-family:"Liberation Sans", sans-serif;font-size:13px;line-height:13px;font-weight:normal;white-space:pre;color:#1E1F22;transform:scaleX(0.9029);transform-origin:0 0;'>of 501+</span>
<svg style="position:absolute;left:465px;top:94px;overflow:visible;" width="6" height="11" viewBox="0 0 6 11" fill="none"><path d="M0.7 0.8 L5.4 5.5 L0.7 10.2" stroke="#6C707E" stroke-width="1.1"/></svg>
<svg style="position:absolute;left:489px;top:94px;overflow:visible;" width="10" height="11" viewBox="0 0 10 11" fill="none"><path d="M0.7 0.8 L5.4 5.5 L0.7 10.2 M9 0.5 V10.5" stroke="#6C707E" stroke-width="1.1"/></svg>
<div style="position:absolute;left:510px;top:90px;width:1px;height:19px;background:#EBECF0;"></div>
<svg style="position:absolute;left:517.4px;top:89.2px;overflow:visible;" width="20.0" height="20.0" viewBox="0 0 20.0 20.0" fill="none"><path d="M4.02 10.52 A6.0 6.0 0 0 1 14.60 6.14 M15.98 9.48 A6.0 6.0 0 0 1 5.40 13.86 M1.62 9.12 L4.02 11.52 L6.42 9.12 M13.58 10.88 L15.98 8.48 L18.38 10.88" stroke="#6C707E" stroke-width="1.3" stroke-linecap="round" stroke-linejoin="round"/></svg>
<svg style="position:absolute;left:545px;top:91px;overflow:visible;" width="18" height="17" viewBox="0 0 18 17" fill="none"><circle cx="8.1" cy="7.9" r="6.9" stroke="#BEC0C5" stroke-width="1.1"/><path d="M7.5 4.8 V8 L10 9.6" stroke="#BEC0C5" stroke-width="1.1"/><path d="M17 13 V16.5 H13.5 Z" fill="#BEC0C5"/></svg>
<div style="position:absolute;left:573px;top:93px;width:12px;height:12px;background:#CBCBCD;border-radius:2.5px"></div>
<div style="position:absolute;left:595px;top:90px;width:1px;height:19px;background:#EBECF0;"></div>
<svg style="position:absolute;left:604.7px;top:91.5px;overflow:visible;" width="14" height="14" viewBox="0 0 14 14" fill="none"><path d="M6.8 0.5 V13.5 M0.3 7 H13.3" stroke="#6C707E" stroke-width="1.1"/></svg>
<div style="position:absolute;left:631px;top:97.9px;width:13px;height:1.2px;background:#BEC0C5;"></div>
<svg style="position:absolute;left:657px;top:92px;overflow:visible;" width="14" height="13" viewBox="0 0 14 13" fill="none"><path d="M4 0.8 L0.8 4 L4 7.2 M0.8 4 H8.5 a4.5 4.5 0 0 1 0 9 H5" stroke="#BEC0C5" stroke-width="1.1"/></svg>
<svg style="position:absolute;left:682px;top:92px;overflow:visible;" width="17" height="15" viewBox="0 0 17 15" fill="none"><path d="M0.8 7 C4 1 12 1 15.5 7 M0.8 7 C2.5 10 5 11.5 7 11.8" stroke="#BEC0C5" stroke-width="1.1"/><circle cx="8" cy="6.8" r="2.3" stroke="#BEC0C5" stroke-width="1.1"/><path d="M12 8.2 L15.3 11.3 H13.3 V14.2 H10.7 V11.3 H8.7 Z" fill="#BEC0C5"/></svg>
<svg style="position:absolute;left:710px;top:92px;overflow:visible;" width="12" height="14" viewBox="0 0 12 14" fill="none"><path d="M6 0.9 L1 5.9 H3.9 V12.4 H8.1 V5.9 H11 Z" stroke="#BEC0C5" stroke-width="1.1" stroke-linejoin="round"/></svg>
<div style="position:absolute;left:732px;top:90px;width:1px;height:19px;background:#EBECF0;"></div>
<svg style="position:absolute;left:798px;top:94px;overflow:visible;" width="6" height="11" viewBox="0 0 6 11" fill="none"><path d="M0.7 0.8 L5.4 5.5 L0.7 10.2" stroke="#6C707E" stroke-width="1.1"/></svg>
<svg style="position:absolute;left:814px;top:94px;overflow:visible;" width="6" height="11" viewBox="0 0 6 11" fill="none"><path d="M0.7 0.8 L5.4 5.5 L0.7 10.2" stroke="#6C707E" stroke-width="1.1"/></svg>
<div style="position:absolute;left:591px;top:117px;width:1px;height:28px;background:#EBECF0;"></div>
<svg style="position:absolute;left:298px;top:125px;overflow:visible;" width="16" height="12" viewBox="0 0 16 12" fill="none"><path d="M0.3 0.3 H11.7 L7.2 5.5 V11.8 H4.8 V5.5 Z" fill="#6C707E"/><path d="M12 5 H16 L14 7.5 Z" fill="#6C707E"/></svg>
<span style='position:absolute;left:320.1px;top:125.85px;font-family:"Liberation Mono", monospace;font-size:13.25px;line-height:13.25px;font-weight:normal;white-space:pre;color:#8C8C8C;transform:scaleX(0.9782);transform-origin:0 0;'>WHERE</span>
<svg style="position:absolute;left:597px;top:126px;overflow:visible;" width="17" height="10" viewBox="0 0 17 10" fill="none"><path d="M0.5 1 H10.5 M0.5 4.7 H8 M0.5 8.5 H5.5" stroke="#6C707E" stroke-width="1.3"/><path d="M12.5 4 H16.5 L14.5 6.5 Z" fill="#6C707E"/></svg>
<span style='position:absolute;left:621.6px;top:125.85px;font-family:"Liberation Mono", monospace;font-size:13.25px;line-height:13.25px;font-weight:normal;white-space:pre;color:#8C8C8C;transform:scaleX(0.9855);transform-origin:0 0;'>ORDER BY</span>
<div style="position:absolute;left:0;top:0;width:1139px;height:635px;clip-path:inset(145px 316px 323px 291px)">
<div style="position:absolute;left:291px;top:145px;width:542px;height:25px;background:#F7F8FA;"></div>
<div style="position:absolute;left:291px;top:145px;width:40px;height:25px;background:#EFF0F2;"></div>
<div style="position:absolute;left:291px;top:171px;width:542px;height:1px;background:#EBECF0;"></div>
<div style="position:absolute;left:291px;top:174px;width:542px;height:1px;background:#EBECF0;"></div>
<div style="position:absolute;left:291px;top:197px;width:542px;height:1px;background:#EBECF0;"></div>
<div style="position:absolute;left:291px;top:220px;width:542px;height:1px;background:#EBECF0;"></div>
<div style="position:absolute;left:291px;top:243px;width:542px;height:1px;background:#EBECF0;"></div>
<div style="position:absolute;left:291px;top:266px;width:542px;height:1px;background:#EBECF0;"></div>
<div style="position:absolute;left:291px;top:289px;width:542px;height:1px;background:#EBECF0;"></div>
<div style="position:absolute;left:291px;top:312px;width:542px;height:1px;background:#EBECF0;"></div>
<div style="position:absolute;left:331px;top:145px;width:1px;height:167px;background:#EBECF0;"></div>
<div style="position:absolute;left:499px;top:145px;width:1px;height:167px;background:#EBECF0;"></div>
<div style="position:absolute;left:619px;top:145px;width:1px;height:167px;background:#EBECF0;"></div>
<div style="position:absolute;left:771px;top:145px;width:1px;height:167px;background:#EBECF0;"></div>
<svg style="position:absolute;left:336px;top:150px;overflow:visible;" width="17" height="17" viewBox="0 0 17 17" fill="none"><path d="M1.4 9.7 V3.3 a1 1 0 0 1 1 -1 H5.8 V6.4" stroke="#3574F0" stroke-width="1.1"/><path d="M5.8 2.3 H13.6 a1 1 0 0 1 1 1 V5.6" stroke="#6C707E" stroke-width="1.1"/><circle cx="2.5" cy="13.4" r="1.9" stroke="#6C707E" stroke-width="1.1"/><circle cx="7.3" cy="9.2" r="1.9" stroke="#3574F0" stroke-width="1.1"/><path d="M7.3 11.1 V15.5 M7.3 14.4 H9.5" stroke="#3574F0" stroke-width="1.1"/><circle cx="13.5" cy="9.2" r="1.9" stroke="#E66D17" stroke-width="1.1"/><path d="M13.5 11.1 V15.5 M13.5 14.4 H15.8" stroke="#E66D17" stroke-width="1.1"/></svg>
<span style='position:absolute;left:357px;top:152.85px;font-family:"Liberation Mono", monospace;font-size:13.25px;line-height:13.25px;font-weight:normal;white-space:pre;color:#000000;transform:scaleX(0.9971);transform-origin:0 0;'>INSTITUSJONSNR</span>
<svg style="position:absolute;left:486px;top:154.5px;overflow:visible;" width="6" height="9" viewBox="0 0 6 9" fill="none"><path d="M0.5 3 L3 0.5 L5.5 3 Z M0.5 6 L3 8.5 L5.5 6 Z" fill="#6C707E"/></svg>
<svg style="position:absolute;left:504px;top:150px;overflow:visible;" width="17" height="17" viewBox="0 0 17 17" fill="none"><path d="M1.4 9.7 V3.3 a1 1 0 0 1 1 -1 H5.8 V11.5" stroke="#3574F0" stroke-width="1.1"/><path d="M5.8 2.3 H13.6 a1 1 0 0 1 1 1 V5.6 M6.2 13.4 H11.7" stroke="#6C707E" stroke-width="1.1"/><circle cx="2.5" cy="13.4" r="1.9" stroke="#6C707E" stroke-width="1.1"/><circle cx="13.5" cy="9.2" r="1.9" stroke="#E66D17" stroke-width="1.1"/><path d="M13.5 11.1 V15.5 M13.5 14.4 H15.8" stroke="#E66D17" stroke-width="1.1"/></svg>
<span style='position:absolute;left:524px;top:152.85px;font-family:"Liberation Mono", monospace;font-size:13.25px;line-height:13.25px;font-weight:normal;white-space:pre;color:#000000;transform:scaleX(0.9996);transform-origin:0 0;'>EMNEKODE</span>
<svg style="position:absolute;left:606px;top:154.5px;overflow:visible;" width="6" height="9" viewBox="0 0 6 9" fill="none"><path d="M0.5 3 L3 0.5 L5.5 3 Z M0.5 6 L3 8.5 L5.5 6 Z" fill="#6C707E"/></svg>
<svg style="position:absolute;left:624px;top:150px;overflow:visible;" width="17" height="17" viewBox="0 0 17 17" fill="none"><path d="M1.4 9.7 V3.3 a1 1 0 0 1 1 -1 H5.8 V11.5" stroke="#3574F0" stroke-width="1.1"/><path d="M5.8 2.3 H13.6 a1 1 0 0 1 1 1 V5.6 M6.2 13.4 H11.7" stroke="#6C707E" stroke-width="1.1"/><circle cx="2.5" cy="13.4" r="1.9" stroke="#6C707E" stroke-width="1.1"/><circle cx="13.5" cy="9.2" r="1.9" stroke="#E66D17" stroke-width="1.1"/><path d="M13.5 11.1 V15.5 M13.5 14.4 H15.8" stroke="#E66D17" stroke-width="1.1"/></svg>
<span style='position:absolute;left:644.8px;top:152.85px;font-family:"Liberation Mono", monospace;font-size:13.25px;line-height:13.25px;font-weight:normal;white-space:pre;color:#000000;transform:scaleX(0.9851);transform-origin:0 0;'>VERSJONSKODE</span>
<svg style="position:absolute;left:757px;top:154.5px;overflow:visible;" width="6" height="9" viewBox="0 0 6 9" fill="none"><path d="M0.5 3 L3 0.5 L5.5 3 Z M0.5 6 L3 8.5 L5.5 6 Z" fill="#6C707E"/></svg>
<svg style="position:absolute;left:776px;top:150px;overflow:visible;" width="17" height="17" viewBox="0 0 17 17" fill="none"><path d="M1.4 9.7 V3.3 a1 1 0 0 1 1 -1 H13.6 a1 1 0 0 1 1 1 V12.4 a1 1 0 0 1 -1 1 H6.2 M5.8 2.3 V11.5" stroke="#6C707E" stroke-width="1.1"/><circle cx="2.5" cy="13.4" r="1.9" stroke="#6C707E" stroke-width="1.1"/></svg>
<span style='position:absolute;left:796px;top:152.85px;font-family:"Liberation Mono", monospace;font-size:13.25px;line-height:13.25px;font-weight:normal;white-space:pre;color:#000000;'>EMNE</span>
<span style='position:absolute;left:300px;top:181.28px;font-family:"Liberation Mono", monospace;font-size:12.3px;line-height:12.3px;font-weight:normal;white-space:pre;color:#A8ADBD;transform:scaleX(1.0027);transform-origin:0 0;'>438</span>
<span style='position:absolute;left:470.34999999999997px;top:180.55px;font-family:"Liberation Mono", monospace;font-size:13.25px;line-height:13.25px;font-weight:normal;white-space:pre;color:#000000;'>207</span>
<span style='position:absolute;left:503.3px;top:180.55px;font-family:"Liberation Mono", monospace;font-size:13.25px;line-height:13.25px;font-weight:normal;white-space:pre;color:#000000;'>SPL1011</span>
<span style='position:absolute;left:623.7px;top:180.55px;font-family:"Liberation Mono", monospace;font-size:13.25px;line-height:13.25px;font-weight:normal;white-space:pre;color:#000000;'>1</span>
<span style='position:absolute;left:775.2px;top:180.55px;font-family:"Liberation Mono", monospace;font-size:13.25px;line-height:13.25px;font-weight:normal;white-space:pre;color:#000000;'>Sykepleie</span>
<span style='position:absolute;left:300px;top:204.28px;font-family:"Liberation Mono", monospace;font-size:12.3px;line-height:12.3px;font-weight:normal;white-space:pre;color:#A8ADBD;transform:scaleX(1.0027);transform-origin:0 0;'>439</span>
<span style='position:absolute;left:470.34999999999997px;top:203.55px;font-family:"Liberation Mono", monospace;font-size:13.25px;line-height:13.25px;font-weight:normal;white-space:pre;color:#000000;'>215</span>
<span style='position:absolute;left:503.3px;top:203.55px;font-family:"Liberation Mono", monospace;font-size:13.25px;line-height:13.25px;font-weight:normal;white-space:pre;color:#000000;'>FO340E</span>
<span style='position:absolute;left:623.7px;top:203.55px;font-family:"Liberation Mono", monospace;font-size:13.25px;line-height:13.25px;font-weight:normal;white-space:pre;color:#000000;'>1</span>
<span style='position:absolute;left:775.2px;top:203.55px;font-family:"Liberation Mono", monospace;font-size:13.25px;line-height:13.25px;font-weight:normal;white-space:pre;color:#000000;'>Fysikk</span>
<span style='position:absolute;left:300px;top:227.28px;font-family:"Liberation Mono", monospace;font-size:12.3px;line-height:12.3px;font-weight:normal;white-space:pre;color:#A8ADBD;transform:scaleX(1.0027);transform-origin:0 0;'>440</span>
<span style='position:absolute;left:470.34999999999997px;top:226.55px;font-family:"Liberation Mono", monospace;font-size:13.25px;line-height:13.25px;font-weight:normal;white-space:pre;color:#000000;'>186</span>
<span style='position:absolute;left:503.3px;top:226.55px;font-family:"Liberation Mono", monospace;font-size:13.25px;line-height:13.25px;font-weight:normal;white-space:pre;color:#000000;'>STATSVHF5</span>
<span style='position:absolute;left:623.7px;top:226.55px;font-family:"Liberation Mono", monospace;font-size:13.25px;line-height:13.25px;font-weight:normal;white-space:pre;color:#000000;'></span>
<span style='position:absolute;left:775.2px;top:226.55px;font-family:"Liberation Mono", monospace;font-size:13.25px;line-height:13.25px;font-weight:normal;white-space:pre;color:#000000;'>Statsvitenskap</span>
<span style='position:absolute;left:300px;top:250.28px;font-family:"Liberation Mono", monospace;font-size:12.3px;line-height:12.3px;font-weight:normal;white-space:pre;color:#A8ADBD;transform:scaleX(1.0027);transform-origin:0 0;'>441</span>
<span style='position:absolute;left:470.34999999999997px;top:249.55px;font-family:"Liberation Mono", monospace;font-size:13.25px;line-height:13.25px;font-weight:normal;white-space:pre;color:#000000;'>185</span>
<span style='position:absolute;left:503.3px;top:249.55px;font-family:"Liberation Mono", monospace;font-size:13.25px;line-height:13.25px;font-weight:normal;white-space:pre;color:#000000;'>KSG1000</span>
<span style='position:absolute;left:623.7px;top:249.55px;font-family:"Liberation Mono", monospace;font-size:13.25px;line-height:13.25px;font-weight:normal;white-space:pre;color:#000000;'>1</span>
<span style='position:absolute;left:775.2px;top:249.55px;font-family:"Liberation Mono", monospace;font-size:13.25px;line-height:13.25px;font-weight:normal;white-space:pre;color:#000000;'>ksg</span>
<span style='position:absolute;left:300px;top:273.28px;font-family:"Liberation Mono", monospace;font-size:12.3px;line-height:12.3px;font-weight:normal;white-space:pre;color:#A8ADBD;transform:scaleX(1.0027);transform-origin:0 0;'>442</span>
<span style='position:absolute;left:470.34999999999997px;top:272.55px;font-family:"Liberation Mono", monospace;font-size:13.25px;line-height:13.25px;font-weight:normal;white-space:pre;color:#000000;'>219</span>
<span style='position:absolute;left:503.3px;top:272.55px;font-family:"Liberation Mono", monospace;font-size:13.25px;line-height:13.25px;font-weight:normal;white-space:pre;color:#000000;'>NO110</span>
<span style='position:absolute;left:623.7px;top:272.55px;font-family:"Liberation Mono", monospace;font-size:13.25px;line-height:13.25px;font-weight:normal;white-space:pre;color:#000000;'>1</span>
<span style='position:absolute;left:775.2px;top:272.55px;font-family:"Liberation Mono", monospace;font-size:13.25px;line-height:13.25px;font-weight:normal;white-space:pre;color:#000000;'>Norsk</span>
<span style='position:absolute;left:300px;top:296.28px;font-family:"Liberation Mono", monospace;font-size:12.3px;line-height:12.3px;font-weight:normal;white-space:pre;color:#A8ADBD;transform:scaleX(1.0027);transform-origin:0 0;'>443</span>
<span style='position:absolute;left:470.34999999999997px;top:295.55px;font-family:"Liberation Mono", monospace;font-size:13.25px;line-height:13.25px;font-weight:normal;white-space:pre;color:#000000;'>185</span>
<span style='position:absolute;left:503.3px;top:295.55px;font-family:"Liberation Mono", monospace;font-size:13.25px;line-height:13.25px;font-weight:normal;white-space:pre;color:#000000;'>CAMPUS102</span>
<span style='position:absolute;left:623.7px;top:295.55px;font-family:"Liberation Mono", monospace;font-size:13.25px;line-height:13.25px;font-weight:normal;white-space:pre;color:#000000;'>1</span>
<span style='position:absolute;left:775.2px;top:295.55px;font-family:"Liberation Mono", monospace;font-size:13.25px;line-height:13.25px;font-weight:normal;white-space:pre;color:#000000;'>Campus</span>
</div>
<div style="position:absolute;left:291px;top:312px;width:532px;height:10px;background:#F7F8FA;"></div>
<div style="position:absolute;left:823px;top:145px;width:10px;height:177px;background:#F7F8FA;"></div>
<div style="position:absolute;left:332px;top:312px;width:20px;height:10px;background:#DCDDDF;"></div>
<div style="position:absolute;left:823px;top:277px;width:10px;height:19px;background:#DCDDDF;"></div>
<div style="position:absolute;left:291px;top:322px;width:542px;height:1px;background:#EBECF0;"></div>
<svg style="position:absolute;left:304.7px;top:337px;overflow:visible;" width="13" height="15" viewBox="0 0 13 15" fill="none"><path d="M0.7 2.6 V11.8 c0 1.1 2.6 2 5.8 2 s5.8 -0.9 5.8 -2 V2.6 Z" fill="#FFFFFF"/><ellipse cx="6.5" cy="2.6" rx="5.8" ry="2.0" stroke="#834DF0" stroke-width="1.1"/><path d="M0.7 2.6 V11.8 M12.3 2.6 V11.8" stroke="#834DF0" stroke-width="1.1"/><path d="M0.7 5.6 c0 1.1 2.6 2 5.8 2 s5.8 -0.9 5.8 -2" stroke="#834DF0" stroke-width="1.1"/><path d="M0.7 8.7 c0 1.1 2.6 2 5.8 2 s5.8 -0.9 5.8 -2" stroke="#834DF0" stroke-width="1.1"/><path d="M0.7 11.8 c0 1.1 2.6 2 5.8 2 s5.8 -0.9 5.8 -2" stroke="#834DF0" stroke-width="1.1"/></svg>
<span style='position:absolute;left:324.1px;top:338.49px;font-family:"Liberation Sans", sans-serif;font-size:13px;line-height:13px;font-weight:normal;white-space:pre;color:#000000;transform:scaleX(1.0470);transform-origin:0 0;'>EmneSoknad.sql</span>
<svg style="position:absolute;left:438px;top:340.5px;overflow:visible;" width="9" height="9" viewBox="0 0 9 9" fill="none"><path d="M0.5 0.5 L8.5 8.5 M8.5 0.5 L0.5 8.5" stroke="#A8ADBD" stroke-width="1.1"/></svg>
<div style="position:absolute;left:291px;top:361px;width:167px;height:3px;background:#A3A8B6;border-radius:1.5px"></div>
<svg style="position:absolute;left:813px;top:338px;overflow:visible;" width="2.2" height="2.2" viewBox="0 0 2.2 2.2" fill="none"><circle cx="1.1" cy="1.1" r="1.1" fill="#6C707E"/></svg>
<svg style="position:absolute;left:813px;top:343px;overflow:visible;" width="2.2" height="2.2" viewBox="0 0 2.2 2.2" fill="none"><circle cx="1.1" cy="1.1" r="1.1" fill="#6C707E"/></svg>
<svg style="position:absolute;left:813px;top:348px;overflow:visible;" width="2.2" height="2.2" viewBox="0 0 2.2 2.2" fill="none"><circle cx="1.1" cy="1.1" r="1.1" fill="#6C707E"/></svg>
<div style="position:absolute;left:291px;top:364px;width:542px;height:1px;background:#EBECF0;"></div>
<div style="position:absolute;left:291px;top:365px;width:542px;height:34px;background:#F7F8FA;"></div>
<div style="position:absolute;left:291px;top:399px;width:542px;height:1px;background:#EBECF0;"></div>
<svg style="position:absolute;left:304px;top:374px;overflow:visible;" width="16" height="16" viewBox="0 0 16 16" fill="none"><path d="M2.2 2.6 a1 1 0 0 1 1.5 -0.9 L13.2 7.1 a1 1 0 0 1 0 1.8 L3.7 14.3 a1 1 0 0 1 -1.5 -0.9 Z" fill="#EFF8F1" stroke="#55A76A" stroke-width="1.25" stroke-linejoin="round"/></svg>
<div style="position:absolute;left:327px;top:372px;width:1px;height:20px;background:#EBECF0;"></div>
<svg style="position:absolute;left:336.8px;top:374.8px;overflow:visible;" width="14" height="14" viewBox="0 0 14 14" fill="none"><circle cx="7" cy="7" r="6.5" stroke="#C4C6CC" stroke-width="1.05"/><path d="M5.6 11 V4.8 M5.6 5.2 a2.3 2.3 0 1 1 0 3.8" stroke="#C4C6CC" stroke-width="1.05"/></svg>
<svg style="position:absolute;left:360.79999999999995px;top:372.7px;overflow:visible;" width="18.2" height="18.2" viewBox="0 0 18.2 18.2" fill="none"><path d="M13.80 9.10 L13.82 9.41 L13.87 9.73 L13.99 10.07 L14.41 10.52 L14.80 11.03 L14.81 11.47 L14.73 11.87 L14.56 12.25 L14.31 12.58 L14.01 12.86 L13.63 13.07 L12.99 12.99 L12.38 12.84 L12.03 12.92 L11.73 13.03 L11.45 13.17 L11.19 13.34 L10.94 13.55 L10.70 13.82 L10.52 14.41 L10.27 15.00 L9.91 15.23 L9.51 15.36 L9.10 15.40 L8.69 15.36 L8.29 15.23 L7.93 15.00 L7.68 14.41 L7.50 13.82 L7.26 13.55 L7.01 13.34 L6.75 13.17 L6.47 13.03 L6.17 12.92 L5.82 12.84 L5.21 12.99 L4.57 13.07 L4.19 12.86 L3.89 12.58 L3.64 12.25 L3.47 11.87 L3.39 11.47 L3.40 11.03 L3.79 10.52 L4.21 10.07 L4.33 9.73 L4.38 9.41 L4.40 9.10 L4.38 8.79 L4.33 8.47 L4.21 8.13 L3.79 7.68 L3.40 7.17 L3.39 6.73 L3.47 6.33 L3.64 5.95 L3.89 5.62 L4.19 5.34 L4.57 5.13 L5.21 5.21 L5.82 5.36 L6.17 5.28 L6.47 5.17 L6.75 5.03 L7.01 4.86 L7.26 4.65 L7.50 4.38 L7.68 3.79 L7.93 3.20 L8.29 2.97 L8.69 2.84 L9.10 2.80 L9.51 2.84 L9.91 2.97 L10.27 3.20 L10.52 3.79 L10.70 4.38 L10.94 4.65 L11.19 4.86 L11.45 5.03 L11.73 5.17 L12.03 5.28 L12.38 5.36 L12.99 5.21 L13.63 5.13 L14.01 5.34 L14.31 5.62 L14.56 5.95 L14.73 6.33 L14.81 6.73 L14.80 7.17 L14.41 7.68 L13.99 8.13 L13.87 8.47 L13.82 8.79Z" stroke="#6C707E" stroke-width="1.1" stroke-linejoin="round"/><circle cx="9.1" cy="9.1" r="2.0" stroke="#6C707E" stroke-width="1.1"/></svg>
<div style="position:absolute;left:386px;top:372px;width:1px;height:20px;background:#EBECF0;"></div>
<span style='position:absolute;left:399.2px;top:374.99px;font-family:"Liberation Sans", sans-serif;font-size:13px;line-height:13px;font-weight:normal;white-space:pre;color:#1E1F22;transform:scaleX(0.9237);transform-origin:0 0;'>Script</span>
<svg style="position:absolute;left:436px;top:381px;overflow:visible;" width="9" height="5" viewBox="0 0 9 5" fill="none"><path d="M0.5 0.5 L4.5 4.5 L8.5 0.5" stroke="#6C707E" stroke-width="1.15" stroke-linecap="round" stroke-linejoin="round"/></svg>
<span style='position:absolute;left:640px;top:374.99px;font-family:"Liberation Sans", sans-serif;font-size:13px;line-height:13px;font-weight:normal;white-space:pre;color:#1E1F22;transform:scaleX(0.8356);transform-origin:0 0;'>Generic SQL</span>
<svg style="position:absolute;left:709px;top:381px;overflow:visible;" width="9" height="5" viewBox="0 0 9 5" fill="none"><path d="M0.5 0.5 L4.5 4.5 L8.5 0.5" stroke="#6C707E" stroke-width="1.15" stroke-linecap="round" stroke-linejoin="round"/></svg>
<svg style="position:absolute;left:732px;top:376px;overflow:visible;" width="18" height="12" viewBox="0 0 18 12" fill="none"><rect x="1.75" y="4.35" width="2.5" height="2.9" stroke="#6C707E" stroke-width="1.1"/><path d="M4.3 4.2 Q5 1.3 6.8 1.3 H12.3 V10.3 H6.8 Q5 10.3 4.3 7.4 Z M12.3 3.5 H16.5 M12.3 8.4 H16.5" stroke="#6C707E" stroke-width="1.1" stroke-linejoin="round"/></svg>
<span style='position:absolute;left:752px;top:374.99px;font-family:"Liberation Sans", sans-serif;font-size:13px;line-height:13px;font-weight:normal;white-space:pre;color:#1E1F22;transform:scaleX(0.8808);transform-origin:0 0;'>&lt;session&gt;</span>
<svg style="position:absolute;left:811px;top:381px;overflow:visible;" width="9" height="5" viewBox="0 0 9 5" fill="none"><path d="M0.5 0.5 L4.5 4.5 L8.5 0.5" stroke="#6C707E" stroke-width="1.15" stroke-linecap="round" stroke-linejoin="round"/></svg>
<div style="position:absolute;left:340px;top:400px;width:1px;height:180px;background:#EBECF0;"></div>
<span style='position:absolute;left:313.7px;top:409.78px;font-family:"Liberation Mono", monospace;font-size:12.3px;line-height:12.3px;font-weight:normal;white-space:pre;color:#AEB3C2;'>4</span>
<span style='position:absolute;left:343.7px;top:409.05px;font-family:"Liberation Mono", monospace;font-size:13.25px;line-height:13.25px;font-weight:normal;white-space:pre;color:#0033B3;'>CREATE</span>
<span style='position:absolute;left:391.46px;top:409.05px;font-family:"Liberation Mono", monospace;font-size:13.25px;line-height:13.25px;font-weight:normal;white-space:pre;color:#080808;'> </span>
<span style='position:absolute;left:399.41999999999996px;top:409.05px;font-family:"Liberation Mono", monospace;font-size:13.25px;line-height:13.25px;font-weight:normal;white-space:pre;color:#0033B3;'>OR</span>
<span style='position:absolute;left:415.34px;top:409.05px;font-family:"Liberation Mono", monospace;font-size:13.25px;line-height:13.25px;font-weight:normal;white-space:pre;color:#080808;'> REPLACE </span>
<span style='position:absolute;left:486.98px;top:409.05px;font-family:"Liberation Mono", monospace;font-size:13.25px;line-height:13.25px;font-weight:normal;white-space:pre;color:#0033B3;'>VIEW</span>
<span style='position:absolute;left:518.8199999999999px;top:409.05px;font-family:"Liberation Mono", monospace;font-size:13.25px;line-height:13.25px;font-weight:normal;white-space:pre;color:#080808;'> Emnesoknad </span>
<span style='position:absolute;left:614.3399999999999px;top:409.05px;font-family:"Liberation Mono", monospace;font-size:13.25px;line-height:13.25px;font-weight:normal;white-space:pre;color:#0033B3;'>AS</span>
<span style='position:absolute;left:313.7px;top:431.78px;font-family:"Liberation Mono", monospace;font-size:12.3px;line-height:12.3px;font-weight:normal;white-space:pre;color:#AEB3C2;'>5</span>
<span style='position:absolute;left:343.7px;top:431.05px;font-family:"Liberation Mono", monospace;font-size:13.25px;line-height:13.25px;font-weight:normal;white-space:pre;color:#0033B3;'>SELECT</span>
<span style='position:absolute;left:391.46px;top:431.05px;font-family:"Liberation Mono", monospace;font-size:13.25px;line-height:13.25px;font-weight:normal;white-space:pre;color:#080808;'> TAB.INSTITUSJONSNR</span>
<span style='position:absolute;left:313.7px;top:453.78px;font-family:"Liberation Mono", monospace;font-size:12.3px;line-height:12.3px;font-weight:normal;white-space:pre;color:#AEB3C2;'>6</span>
<span style='position:absolute;left:343.7px;top:453.05px;font-family:"Liberation Mono", monospace;font-size:13.25px;line-height:13.25px;font-weight:normal;white-space:pre;color:#080808;'>     ,TAB.EMNEKODE</span>
<span style='position:absolute;left:313.7px;top:475.78px;font-family:"Liberation Mono", monospace;font-size:12.3px;line-height:12.3px;font-weight:normal;white-space:pre;color:#AEB3C2;'>7</span>
<span style='position:absolute;left:343.7px;top:475.05px;font-family:"Liberation Mono", monospace;font-size:13.25px;line-height:13.25px;font-weight:normal;white-space:pre;color:#080808;'>     ,TAB.VERSJONSKODE</span>
<span style='position:absolute;left:313.7px;top:497.78px;font-family:"Liberation Mono", monospace;font-size:12.3px;line-height:12.3px;font-weight:normal;white-space:pre;color:#AEB3C2;'>8</span>
<span style='position:absolute;left:343.7px;top:497.05px;font-family:"Liberation Mono", monospace;font-size:13.25px;line-height:13.25px;font-weight:normal;white-space:pre;color:#080808;'>     ,TAB.TERMINKODE</span>
<span style='position:absolute;left:313.7px;top:519.78px;font-family:"Liberation Mono", monospace;font-size:12.3px;line-height:12.3px;font-weight:normal;white-space:pre;color:#AEB3C2;'>9</span>
<span style='position:absolute;left:343.7px;top:519.05px;font-family:"Liberation Mono", monospace;font-size:13.25px;line-height:13.25px;font-weight:normal;white-space:pre;color:#080808;'>     ,TAB.ARSTALL</span>
<span style='position:absolute;left:306.4px;top:541.78px;font-family:"Liberation Mono", monospace;font-size:12.3px;line-height:12.3px;font-weight:normal;white-space:pre;color:#AEB3C2;'>10</span>
<span style='position:absolute;left:343.7px;top:541.05px;font-family:"Liberation Mono", monospace;font-size:13.25px;line-height:13.25px;font-weight:normal;white-space:pre;color:#080808;'>     ,TAB.PLNR</span>
<span style='position:absolute;left:306.4px;top:563.78px;font-family:"Liberation Mono", monospace;font-size:12.3px;line-height:12.3px;font-weight:normal;white-space:pre;color:#AEB3C2;'>11</span>
<span style='position:absolute;left:343.7px;top:563.05px;font-family:"Liberation Mono", monospace;font-size:13.25px;line-height:13.25px;font-weight:normal;white-space:pre;color:#080808;'>     ,TAB.TERMINKODE_PLANLAGT_EKSAMEN</span>
<span style='position:absolute;left:759px;top:407.49px;font-family:"Liberation Sans", sans-serif;font-size:13px;line-height:13px;font-weight:normal;white-space:pre;color:#A8ADBD;transform:scaleX(1.0667);transform-origin:0 0;'>Indexing...</span>
<div style="position:absolute;left:343px;top:570px;width:417px;height:10px;background:rgba(0,0,0,0.115);"></div>
<div style="position:absolute;left:823px;top:435px;width:10px;height:35px;background:rgba(0,0,0,0.115);"></div>
<div style="position:absolute;left:291px;top:580px;width:542px;height:1px;background:#EBECF0;"></div>
<div style="position:absolute;left:833px;top:40px;width:1px;height:564px;background:#EBECF0;"></div>
<div style="position:absolute;left:834px;top:40px;width:305px;height:564px;background:#F7F8FA;"></div>
<span style='position:absolute;left:846.4px;top:54.99px;font-family:"Liberation Sans", sans-serif;font-size:13px;line-height:13px;font-weight:normal;white-space:pre;color:#1E1F22;transform:scaleX(1.0454);transform-origin:0 0;-webkit-text-stroke:0.45px #1E1F22'>Files</span>
<svg style="position:absolute;left:882px;top:59.5px;overflow:visible;" width="9" height="5" viewBox="0 0 9 5" fill="none"><path d="M0.5 0.5 L4.5 4.5 L8.5 0.5" stroke="#6C707E" stroke-width="1.15" stroke-linecap="round" stroke-linejoin="round"/></svg>
<div style="position:absolute;left:834px;top:81px;width:305px;height:1px;background:#EBECF0;"></div>
<div style="position:absolute;left:0;top:0;width:1139px;height:635px;clip-path:inset(82px 0px 31px 834px)">
<div style="position:absolute;left:846px;top:418px;width:280px;height:24px;background:#DFE1E5;border-radius:5px"></div>
<svg style="position:absolute;left:844.7px;top:92px;overflow:visible;" width="9" height="5" viewBox="0 0 9 5" fill="none"><path d="M0.5 0.5 L4.5 4.5 L8.5 0.5" stroke="#8C8F99" stroke-width="1.15" stroke-linecap="round" stroke-linejoin="round"/></svg>
<svg style="position:absolute;left:863.0px;top:88px;overflow:visible;" width="15" height="13" viewBox="0 0 15 13" fill="none"><path d="M0.7 2 a1.3 1.3 0 0 1 1.3 -1.3 H5.6 L7.3 2.7 H12.1 a1.3 1.3 0 0 1 1.3 1.3 V9.9 a1.3 1.3 0 0 1 -1.3 1.3 H2 a1.3 1.3 0 0 1 -1.3 -1.3 Z" fill="#EBECF0" stroke="#6C707E" stroke-width="1.15" stroke-linejoin="round"/></svg>
<span style='position:absolute;left:881.2px;top:87.99px;font-family:"Liberation Sans", sans-serif;font-size:13px;line-height:13px;font-weight:normal;white-space:pre;color:#000000;transform:scaleX(1.0436);transform-origin:0 0;'>no</span>
<svg style="position:absolute;left:864.0px;top:116px;overflow:visible;" width="9" height="5" viewBox="0 0 9 5" fill="none"><path d="M0.5 0.5 L4.5 4.5 L8.5 0.5" stroke="#8C8F99" stroke-width="1.15" stroke-linecap="round" stroke-linejoin="round"/></svg>
<svg style="position:absolute;left:882.3px;top:112px;overflow:visible;" width="15" height="13" viewBox="0 0 15 13" fill="none"><path d="M0.7 2 a1.3 1.3 0 0 1 1.3 -1.3 H5.6 L7.3 2.7 H12.1 a1.3 1.3 0 0 1 1.3 1.3 V9.9 a1.3 1.3 0 0 1 -1.3 1.3 H2 a1.3 1.3 0 0 1 -1.3 -1.3 Z" fill="#EBECF0" stroke="#6C707E" stroke-width="1.15" stroke-linejoin="round"/></svg>
<span style='position:absolute;left:900.5px;top:111.99px;font-family:"Liberation Sans", sans-serif;font-size:13px;line-height:13px;font-weight:normal;white-space:pre;color:#000000;transform:scaleX(1.1176);transform-origin:0 0;'>fellesstudentsystem</span>
<svg style="position:absolute;left:883.3000000000001px;top:140px;overflow:visible;" width="9" height="5" viewBox="0 0 9 5" fill="none"><path d="M0.5 0.5 L4.5 4.5 L8.5 0.5" stroke="#8C8F99" stroke-width="1.15" stroke-linecap="round" stroke-linejoin="round"/></svg>
<svg style="position:absolute;left:901.6px;top:136px;overflow:visible;" width="15" height="13" viewBox="0 0 15 13" fill="none"><path d="M0.7 2 a1.3 1.3 0 0 1 1.3 -1.3 H5.6 L7.3 2.7 H12.1 a1.3 1.3 0 0 1 1.3 1.3 V9.9 a1.3 1.3 0 0 1 -1.3 1.3 H2 a1.3 1.3 0 0 1 -1.3 -1.3 Z" fill="#EBECF0" stroke="#6C707E" stroke-width="1.15" stroke-linejoin="round"/></svg>
<span style='position:absolute;left:919.8000000000001px;top:135.99px;font-family:"Liberation Sans", sans-serif;font-size:13px;line-height:13px;font-weight:normal;white-space:pre;color:#000000;transform:scaleX(1.0208);transform-origin:0 0;'>kjerneapi_db</span>
<svg style="position:absolute;left:903.1px;top:161.6px;overflow:visible;" width="5.2" height="8.6" viewBox="0 0 5.2 8.6" fill="none"><path d="M0.5 0.5 L4.7 4.3 L0.5 8.1" stroke="#8C8F99" stroke-width="1.15" stroke-linecap="round" stroke-linejoin="round"/></svg>
<svg style="position:absolute;left:920.9px;top:160px;overflow:visible;" width="15" height="13" viewBox="0 0 15 13" fill="none"><path d="M0.7 2 a1.3 1.3 0 0 1 1.3 -1.3 H5.6 L7.3 2.7 H12.1 a1.3 1.3 0 0 1 1.3 1.3 V9.9 a1.3 1.3 0 0 1 -1.3 1.3 H2 a1.3 1.3 0 0 1 -1.3 -1.3 Z" fill="#EBECF0" stroke="#6C707E" stroke-width="1.15" stroke-linejoin="round"/></svg>
<span style='position:absolute;left:939.1px;top:159.99px;font-family:"Liberation Sans", sans-serif;font-size:13px;line-height:13px;font-weight:normal;white-space:pre;color:#000000;transform:scaleX(1.0457);transform-origin:0 0;'>packages</span>
<svg style="position:absolute;left:902.6px;top:188px;overflow:visible;" width="9" height="5" viewBox="0 0 9 5" fill="none"><path d="M0.5 0.5 L4.5 4.5 L8.5 0.5" stroke="#8C8F99" stroke-width="1.15" stroke-linecap="round" stroke-linejoin="round"/></svg>
<svg style="position:absolute;left:920.9px;top:184px;overflow:visible;" width="15" height="13" viewBox="0 0 15 13" fill="none"><path d="M0.7 2 a1.3 1.3 0 0 1 1.3 -1.3 H5.6 L7.3 2.7 H12.1 a1.3 1.3 0 0 1 1.3 1.3 V9.9 a1.3 1.3 0 0 1 -1.3 1.3 H2 a1.3 1.3 0 0 1 -1.3 -1.3 Z" fill="#EBECF0" stroke="#6C707E" stroke-width="1.15" stroke-linejoin="round"/></svg>
<span style='position:absolute;left:939.1px;top:183.99px;font-family:"Liberation Sans", sans-serif;font-size:13px;line-height:13px;font-weight:normal;white-space:pre;color:#000000;transform:scaleX(1.1116);transform-origin:0 0;'>triggers</span>
<svg style="position:absolute;left:939.5px;top:207.4px;overflow:visible;" width="13" height="15" viewBox="0 0 13 15" fill="none"><path d="M0.7 2.6 V11.8 c0 1.1 2.6 2 5.8 2 s5.8 -0.9 5.8 -2 V2.6 Z" fill="#FFFFFF"/><ellipse cx="6.5" cy="2.6" rx="5.8" ry="2.0" stroke="#834DF0" stroke-width="1.1"/><path d="M0.7 2.6 V11.8 M12.3 2.6 V11.8" stroke="#834DF0" stroke-width="1.1"/><path d="M0.7 5.6 c0 1.1 2.6 2 5.8 2 s5.8 -0.9 5.8 -2" stroke="#834DF0" stroke-width="1.1"/><path d="M0.7 8.7 c0 1.1 2.6 2 5.8 2 s5.8 -0.9 5.8 -2" stroke="#834DF0" stroke-width="1.1"/><path d="M0.7 11.8 c0 1.1 2.6 2 5.8 2 s5.8 -0.9 5.8 -2" stroke="#834DF0" stroke-width="1.1"/></svg>
<span style='position:absolute;left:956.9px;top:207.99px;font-family:"Liberation Sans", sans-serif;font-size:13px;line-height:13px;font-weight:normal;white-space:pre;color:#000000;transform:scaleX(1.0337);transform-origin:0 0;'>IODMelding_Om_Dodsfall.sql</span>
<svg style="position:absolute;left:939.5px;top:231.4px;overflow:visible;" width="13" height="15" viewBox="0 0 13 15" fill="none"><path d="M0.7 2.6 V11.8 c0 1.1 2.6 2 5.8 2 s5.8 -0.9 5.8 -2 V2.6 Z" fill="#FFFFFF"/><ellipse cx="6.5" cy="2.6" rx="5.8" ry="2.0" stroke="#834DF0" stroke-width="1.1"/><path d="M0.7 2.6 V11.8 M12.3 2.6 V11.8" stroke="#834DF0" stroke-width="1.1"/><path d="M0.7 5.6 c0 1.1 2.6 2 5.8 2 s5.8 -0.9 5.8 -2" stroke="#834DF0" stroke-width="1.1"/><path d="M0.7 8.7 c0 1.1 2.6 2 5.8 2 s5.8 -0.9 5.8 -2" stroke="#834DF0" stroke-width="1.1"/><path d="M0.7 11.8 c0 1.1 2.6 2 5.8 2 s5.8 -0.9 5.8 -2" stroke="#834DF0" stroke-width="1.1"/></svg>
<span style='position:absolute;left:956.9px;top:231.99px;font-family:"Liberation Sans", sans-serif;font-size:13px;line-height:13px;font-weight:normal;white-space:pre;color:#000000;transform:scaleX(1.05);transform-origin:0 0'>IODMelding_Om_Fodselsnummer.sql</span>
<svg style="position:absolute;left:939.5px;top:255.4px;overflow:visible;" width="13" height="15" viewBox="0 0 13 15" fill="none"><path d="M0.7 2.6 V11.8 c0 1.1 2.6 2 5.8 2 s5.8 -0.9 5.8 -2 V2.6 Z" fill="#FFFFFF"/><ellipse cx="6.5" cy="2.6" rx="5.8" ry="2.0" stroke="#834DF0" stroke-width="1.1"/><path d="M0.7 2.6 V11.8 M12.3 2.6 V11.8" stroke="#834DF0" stroke-width="1.1"/><path d="M0.7 5.6 c0 1.1 2.6 2 5.8 2 s5.8 -0.9 5.8 -2" stroke="#834DF0" stroke-width="1.1"/><path d="M0.7 8.7 c0 1.1 2.6 2 5.8 2 s5.8 -0.9 5.8 -2" stroke="#834DF0" stroke-width="1.1"/><path d="M0.7 11.8 c0 1.1 2.6 2 5.8 2 s5.8 -0.9 5.8 -2" stroke="#834DF0" stroke-width="1.1"/></svg>
<span style='position:absolute;left:956.9px;top:255.99px;font-family:"Liberation Sans", sans-serif;font-size:13px;line-height:13px;font-weight:normal;white-space:pre;color:#000000;transform:scaleX(1.0316);transform-origin:0 0;'>IOIMelding_Om_Dodsfall.sql</span>
<svg style="position:absolute;left:939.5px;top:279.4px;overflow:visible;" width="13" height="15" viewBox="0 0 13 15" fill="none"><path d="M0.7 2.6 V11.8 c0 1.1 2.6 2 5.8 2 s5.8 -0.9 5.8 -2 V2.6 Z" fill="#FFFFFF"/><ellipse cx="6.5" cy="2.6" rx="5.8" ry="2.0" stroke="#834DF0" stroke-width="1.1"/><path d="M0.7 2.6 V11.8 M12.3 2.6 V11.8" stroke="#834DF0" stroke-width="1.1"/><path d="M0.7 5.6 c0 1.1 2.6 2 5.8 2 s5.8 -0.9 5.8 -2" stroke="#834DF0" stroke-width="1.1"/><path d="M0.7 8.7 c0 1.1 2.6 2 5.8 2 s5.8 -0.9 5.8 -2" stroke="#834DF0" stroke-width="1.1"/><path d="M0.7 11.8 c0 1.1 2.6 2 5.8 2 s5.8 -0.9 5.8 -2" stroke="#834DF0" stroke-width="1.1"/></svg>
<span style='position:absolute;left:956.9px;top:279.99px;font-family:"Liberation Sans", sans-serif;font-size:13px;line-height:13px;font-weight:normal;white-space:pre;color:#000000;transform:scaleX(1.05);transform-origin:0 0'>IOIMelding_Om_Fodselsnummer.sql</span>
<svg style="position:absolute;left:939.5px;top:303.4px;overflow:visible;" width="13" height="15" viewBox="0 0 13 15" fill="none"><path d="M0.7 2.6 V11.8 c0 1.1 2.6 2 5.8 2 s5.8 -0.9 5.8 -2 V2.6 Z" fill="#FFFFFF"/><ellipse cx="6.5" cy="2.6" rx="5.8" ry="2.0" stroke="#834DF0" stroke-width="1.1"/><path d="M0.7 2.6 V11.8 M12.3 2.6 V11.8" stroke="#834DF0" stroke-width="1.1"/><path d="M0.7 5.6 c0 1.1 2.6 2 5.8 2 s5.8 -0.9 5.8 -2" stroke="#834DF0" stroke-width="1.1"/><path d="M0.7 8.7 c0 1.1 2.6 2 5.8 2 s5.8 -0.9 5.8 -2" stroke="#834DF0" stroke-width="1.1"/><path d="M0.7 11.8 c0 1.1 2.6 2 5.8 2 s5.8 -0.9 5.8 -2" stroke="#834DF0" stroke-width="1.1"/></svg>
<span style='position:absolute;left:956.9px;top:303.99px;font-family:"Liberation Sans", sans-serif;font-size:13px;line-height:13px;font-weight:normal;white-space:pre;color:#000000;transform:scaleX(1.0395);transform-origin:0 0;'>IOUMelding_Om_Dodsfall.sql</span>
<svg style="position:absolute;left:939.5px;top:327.4px;overflow:visible;" width="13" height="15" viewBox="0 0 13 15" fill="none"><path d="M0.7 2.6 V11.8 c0 1.1 2.6 2 5.8 2 s5.8 -0.9 5.8 -2 V2.6 Z" fill="#FFFFFF"/><ellipse cx="6.5" cy="2.6" rx="5.8" ry="2.0" stroke="#834DF0" stroke-width="1.1"/><path d="M0.7 2.6 V11.8 M12.3 2.6 V11.8" stroke="#834DF0" stroke-width="1.1"/><path d="M0.7 5.6 c0 1.1 2.6 2 5.8 2 s5.8 -0.9 5.8 -2" stroke="#834DF0" stroke-width="1.1"/><path d="M0.7 8.7 c0 1.1 2.6 2 5.8 2 s5.8 -0.9 5.8 -2" stroke="#834DF0" stroke-width="1.1"/><path d="M0.7 11.8 c0 1.1 2.6 2 5.8 2 s5.8 -0.9 5.8 -2" stroke="#834DF0" stroke-width="1.1"/></svg>
<span style='position:absolute;left:956.9px;top:327.99px;font-family:"Liberation Sans", sans-serif;font-size:13px;line-height:13px;font-weight:normal;white-space:pre;color:#000000;transform:scaleX(1.05);transform-origin:0 0'>IOUMelding_Om_Fodselsnummer.sql</span>
<svg style="position:absolute;left:939.5px;top:351.4px;overflow:visible;" width="13" height="15" viewBox="0 0 13 15" fill="none"><path d="M0.7 2.6 V11.8 c0 1.1 2.6 2 5.8 2 s5.8 -0.9 5.8 -2 V2.6 Z" fill="#FFFFFF"/><ellipse cx="6.5" cy="2.6" rx="5.8" ry="2.0" stroke="#834DF0" stroke-width="1.1"/><path d="M0.7 2.6 V11.8 M12.3 2.6 V11.8" stroke="#834DF0" stroke-width="1.1"/><path d="M0.7 5.6 c0 1.1 2.6 2 5.8 2 s5.8 -0.9 5.8 -2" stroke="#834DF0" stroke-width="1.1"/><path d="M0.7 8.7 c0 1.1 2.6 2 5.8 2 s5.8 -0.9 5.8 -2" stroke="#834DF0" stroke-width="1.1"/><path d="M0.7 11.8 c0 1.1 2.6 2 5.8 2 s5.8 -0.9 5.8 -2" stroke="#834DF0" stroke-width="1.1"/></svg>
<span style='position:absolute;left:956.9px;top:351.99px;font-family:"Liberation Sans", sans-serif;font-size:13px;line-height:13px;font-weight:normal;white-space:pre;color:#000000;transform:scaleX(1.0399);transform-origin:0 0;'>Pass.sql</span>
<svg style="position:absolute;left:940px;top:376px;overflow:visible;" width="13" height="12" viewBox="0 0 13 12" fill="none"><path d="M0.5 1 H12 M0.5 4.3 H8.5 M0.5 7.6 H12 M0.5 11 H8.5" stroke="#6C707E" stroke-width="1.1"/></svg>
<span style='position:absolute;left:956.9px;top:375.99px;font-family:"Liberation Sans", sans-serif;font-size:13px;line-height:13px;font-weight:normal;white-space:pre;color:#000000;transform:scaleX(0.9949);transform-origin:0 0;'>README.md</span>
<svg style="position:absolute;left:902.6px;top:404px;overflow:visible;" width="9" height="5" viewBox="0 0 9 5" fill="none"><path d="M0.5 0.5 L4.5 4.5 L8.5 0.5" stroke="#8C8F99" stroke-width="1.15" stroke-linecap="round" stroke-linejoin="round"/></svg>
<svg style="position:absolute;left:920.9px;top:400px;overflow:visible;" width="15" height="13" viewBox="0 0 15 13" fill="none"><path d="M0.7 2 a1.3 1.3 0 0 1 1.3 -1.3 H5.6 L7.3 2.7 H12.1 a1.3 1.3 0 0 1 1.3 1.3 V9.9 a1.3 1.3 0 0 1 -1.3 1.3 H2 a1.3 1.3 0 0 1 -1.3 -1.3 Z" fill="#EBECF0" stroke="#6C707E" stroke-width="1.15" stroke-linejoin="round"/></svg>
<span style='position:absolute;left:939.1px;top:399.99px;font-family:"Liberation Sans", sans-serif;font-size:13px;line-height:13px;font-weight:normal;white-space:pre;color:#000000;transform:scaleX(1.0856);transform-origin:0 0;'>views</span>
<svg style="position:absolute;left:939.5px;top:423.4px;overflow:visible;" width="13" height="15" viewBox="0 0 13 15" fill="none"><path d="M0.7 2.6 V11.8 c0 1.1 2.6 2 5.8 2 s5.8 -0.9 5.8 -2 V2.6 Z" fill="#FFFFFF"/><ellipse cx="6.5" cy="2.6" rx="5.8" ry="2.0" stroke="#834DF0" stroke-width="1.1"/><path d="M0.7 2.6 V11.8 M12.3 2.6 V11.8" stroke="#834DF0" stroke-width="1.1"/><path d="M0.7 5.6 c0 1.1 2.6 2 5.8 2 s5.8 -0.9 5.8 -2" stroke="#834DF0" stroke-width="1.1"/><path d="M0.7 8.7 c0 1.1 2.6 2 5.8 2 s5.8 -0.9 5.8 -2" stroke="#834DF0" stroke-width="1.1"/><path d="M0.7 11.8 c0 1.1 2.6 2 5.8 2 s5.8 -0.9 5.8 -2" stroke="#834DF0" stroke-width="1.1"/></svg>
<span style='position:absolute;left:956.9px;top:423.99px;font-family:"Liberation Sans", sans-serif;font-size:13px;line-height:13px;font-weight:normal;white-space:pre;color:#000000;transform:scaleX(1.0429);transform-origin:0 0;'>EmneSoknad.sql</span>
<svg style="position:absolute;left:939.5px;top:447.4px;overflow:visible;" width="13" height="15" viewBox="0 0 13 15" fill="none"><path d="M0.7 2.6 V11.8 c0 1.1 2.6 2 5.8 2 s5.8 -0.9 5.8 -2 V2.6 Z" fill="#FFFFFF"/><ellipse cx="6.5" cy="2.6" rx="5.8" ry="2.0" stroke="#834DF0" stroke-width="1.1"/><path d="M0.7 2.6 V11.8 M12.3 2.6 V11.8" stroke="#834DF0" stroke-width="1.1"/><path d="M0.7 5.6 c0 1.1 2.6 2 5.8 2 s5.8 -0.9 5.8 -2" stroke="#834DF0" stroke-width="1.1"/><path d="M0.7 8.7 c0 1.1 2.6 2 5.8 2 s5.8 -0.9 5.8 -2" stroke="#834DF0" stroke-width="1.1"/><path d="M0.7 11.8 c0 1.1 2.6 2 5.8 2 s5.8 -0.9 5.8 -2" stroke="#834DF0" stroke-width="1.1"/></svg>
<span style='position:absolute;left:956.9px;top:447.99px;font-family:"Liberation Sans", sans-serif;font-size:13px;line-height:13px;font-weight:normal;white-space:pre;color:#000000;transform:scaleX(1.0879);transform-origin:0 0;'>EmneStudierett.sql</span>
<svg style="position:absolute;left:939.5px;top:471.4px;overflow:visible;" width="13" height="15" viewBox="0 0 13 15" fill="none"><path d="M0.7 2.6 V11.8 c0 1.1 2.6 2 5.8 2 s5.8 -0.9 5.8 -2 V2.6 Z" fill="#FFFFFF"/><ellipse cx="6.5" cy="2.6" rx="5.8" ry="2.0" stroke="#834DF0" stroke-width="1.1"/><path d="M0.7 2.6 V11.8 M12.3 2.6 V11.8" stroke="#834DF0" stroke-width="1.1"/><path d="M0.7 5.6 c0 1.1 2.6 2 5.8 2 s5.8 -0.9 5.8 -2" stroke="#834DF0" stroke-width="1.1"/><path d="M0.7 8.7 c0 1.1 2.6 2 5.8 2 s5.8 -0.9 5.8 -2" stroke="#834DF0" stroke-width="1.1"/><path d="M0.7 11.8 c0 1.1 2.6 2 5.8 2 s5.8 -0.9 5.8 -2" stroke="#834DF0" stroke-width="1.1"/></svg>
<span style='position:absolute;left:956.9px;top:471.99px;font-family:"Liberation Sans", sans-serif;font-size:13px;line-height:13px;font-weight:normal;white-space:pre;color:#000000;transform:scaleX(1.05);transform-origin:0 0'>EmneUndterminBeskrivelse.sql</span>
<svg style="position:absolute;left:939.5px;top:495.4px;overflow:visible;" width="13" height="15" viewBox="0 0 13 15" fill="none"><path d="M0.7 2.6 V11.8 c0 1.1 2.6 2 5.8 2 s5.8 -0.9 5.8 -2 V2.6 Z" fill="#FFFFFF"/><ellipse cx="6.5" cy="2.6" rx="5.8" ry="2.0" stroke="#834DF0" stroke-width="1.1"/><path d="M0.7 2.6 V11.8 M12.3 2.6 V11.8" stroke="#834DF0" stroke-width="1.1"/><path d="M0.7 5.6 c0 1.1 2.6 2 5.8 2 s5.8 -0.9 5.8 -2" stroke="#834DF0" stroke-width="1.1"/><path d="M0.7 8.7 c0 1.1 2.6 2 5.8 2 s5.8 -0.9 5.8 -2" stroke="#834DF0" stroke-width="1.1"/><path d="M0.7 11.8 c0 1.1 2.6 2 5.8 2 s5.8 -0.9 5.8 -2" stroke="#834DF0" stroke-width="1.1"/></svg>
<span style='position:absolute;left:956.9px;top:495.99px;font-family:"Liberation Sans", sans-serif;font-size:13px;line-height:13px;font-weight:normal;white-space:pre;color:#000000;transform:scaleX(1.0437);transform-origin:0 0;'>Melding_Om_Dodsfall.sql</span>
<svg style="position:absolute;left:939.5px;top:519.4px;overflow:visible;" width="13" height="15" viewBox="0 0 13 15" fill="none"><path d="M0.7 2.6 V11.8 c0 1.1 2.6 2 5.8 2 s5.8 -0.9 5.8 -2 V2.6 Z" fill="#FFFFFF"/><ellipse cx="6.5" cy="2.6" rx="5.8" ry="2.0" stroke="#834DF0" stroke-width="1.1"/><path d="M0.7 2.6 V11.8 M12.3 2.6 V11.8" stroke="#834DF0" stroke-width="1.1"/><path d="M0.7 5.6 c0 1.1 2.6 2 5.8 2 s5.8 -0.9 5.8 -2" stroke="#834DF0" stroke-width="1.1"/><path d="M0.7 8.7 c0 1.1 2.6 2 5.8 2 s5.8 -0.9 5.8 -2" stroke="#834DF0" stroke-width="1.1"/><path d="M0.7 11.8 c0 1.1 2.6 2 5.8 2 s5.8 -0.9 5.8 -2" stroke="#834DF0" stroke-width="1.1"/></svg>
<span style='position:absolute;left:956.9px;top:519.99px;font-family:"Liberation Sans", sans-serif;font-size:13px;line-height:13px;font-weight:normal;white-space:pre;color:#000000;transform:scaleX(1.05);transform-origin:0 0'>Melding_Om_Fodselsnummer.sql</span>
<svg style="position:absolute;left:939.5px;top:543.4px;overflow:visible;" width="13" height="15" viewBox="0 0 13 15" fill="none"><path d="M0.7 2.6 V11.8 c0 1.1 2.6 2 5.8 2 s5.8 -0.9 5.8 -2 V2.6 Z" fill="#FFFFFF"/><ellipse cx="6.5" cy="2.6" rx="5.8" ry="2.0" stroke="#834DF0" stroke-width="1.1"/><path d="M0.7 2.6 V11.8 M12.3 2.6 V11.8" stroke="#834DF0" stroke-width="1.1"/><path d="M0.7 5.6 c0 1.1 2.6 2 5.8 2 s5.8 -0.9 5.8 -2" stroke="#834DF0" stroke-width="1.1"/><path d="M0.7 8.7 c0 1.1 2.6 2 5.8 2 s5.8 -0.9 5.8 -2" stroke="#834DF0" stroke-width="1.1"/><path d="M0.7 11.8 c0 1.1 2.6 2 5.8 2 s5.8 -0.9 5.8 -2" stroke="#834DF0" stroke-width="1.1"/></svg>
<span style='position:absolute;left:956.9px;top:543.99px;font-family:"Liberation Sans", sans-serif;font-size:13px;line-height:13px;font-weight:normal;white-space:pre;color:#000000;transform:scaleX(1.0668);transform-origin:0 0;'>Organisasjonshierarki.sql</span>
<svg style="position:absolute;left:939.5px;top:567.4px;overflow:visible;" width="13" height="15" viewBox="0 0 13 15" fill="none"><path d="M0.7 2.6 V11.8 c0 1.1 2.6 2 5.8 2 s5.8 -0.9 5.8 -2 V2.6 Z" fill="#FFFFFF"/><ellipse cx="6.5" cy="2.6" rx="5.8" ry="2.0" stroke="#834DF0" stroke-width="1.1"/><path d="M0.7 2.6 V11.8 M12.3 2.6 V11.8" stroke="#834DF0" stroke-width="1.1"/><path d="M0.7 5.6 c0 1.1 2.6 2 5.8 2 s5.8 -0.9 5.8 -2" stroke="#834DF0" stroke-width="1.1"/><path d="M0.7 8.7 c0 1.1 2.6 2 5.8 2 s5.8 -0.9 5.8 -2" stroke="#834DF0" stroke-width="1.1"/><path d="M0.7 11.8 c0 1.1 2.6 2 5.8 2 s5.8 -0.9 5.8 -2" stroke="#834DF0" stroke-width="1.1"/></svg>
<span style='position:absolute;left:956.9px;top:567.99px;font-family:"Liberation Sans", sans-serif;font-size:13px;line-height:13px;font-weight:normal;white-space:pre;color:#000000;transform:scaleX(1.0399);transform-origin:0 0;'>Pass.sql</span>
<svg style="position:absolute;left:939.5px;top:591.4px;overflow:visible;" width="13" height="15" viewBox="0 0 13 15" fill="none"><path d="M0.7 2.6 V11.8 c0 1.1 2.6 2 5.8 2 s5.8 -0.9 5.8 -2 V2.6 Z" fill="#FFFFFF"/><ellipse cx="6.5" cy="2.6" rx="5.8" ry="2.0" stroke="#834DF0" stroke-width="1.1"/><path d="M0.7 2.6 V11.8 M12.3 2.6 V11.8" stroke="#834DF0" stroke-width="1.1"/><path d="M0.7 5.6 c0 1.1 2.6 2 5.8 2 s5.8 -0.9 5.8 -2" stroke="#834DF0" stroke-width="1.1"/><path d="M0.7 8.7 c0 1.1 2.6 2 5.8 2 s5.8 -0.9 5.8 -2" stroke="#834DF0" stroke-width="1.1"/><path d="M0.7 11.8 c0 1.1 2.6 2 5.8 2 s5.8 -0.9 5.8 -2" stroke="#834DF0" stroke-width="1.1"/></svg>
<span style='position:absolute;left:956.9px;top:591.99px;font-family:"Liberation Sans", sans-serif;font-size:13px;line-height:13px;font-weight:normal;white-space:pre;color:#000000;transform:scaleX(1.05);transform-origin:0 0'>Personrolle.sql</span>
<div style="position:absolute;left:1128px;top:194px;width:10px;height:107px;background:rgba(0,0,0,0.115);"></div>
<div style="position:absolute;left:889px;top:594px;width:167px;height:10px;background:rgba(0,0,0,0.115);"></div>
</div>
<div style="position:absolute;left:0px;top:604px;width:1139px;height:31px;background:#F7F8FA;"></div>
<div style="position:absolute;left:0px;top:604px;width:1139px;height:1px;background:#EBECF0;"></div>
<span style='position:absolute;left:15.1px;top:611.99px;font-family:"Liberation Sans", sans-serif;font-size:13px;line-height:13px;font-weight:normal;white-space:pre;color:#6C707E;transform:scaleX(1.0223);transform-origin:0 0;'>Database</span>
<svg style="position:absolute;left:82.5px;top:614.5px;overflow:visible;" width="5" height="9" viewBox="0 0 5 9" fill="none"><path d="M0.5 0.5 L4.5 4.5 L0.5 8.5" stroke="#6C707E" stroke-width="1.15" stroke-linecap="round" stroke-linejoin="round"/></svg>
<span style='position:absolute;left:97px;top:611.99px;font-family:"Liberation Sans", sans-serif;font-size:13px;line-height:13px;font-weight:normal;white-space:pre;color:#6C707E;transform:scaleX(0.9964);transform-origin:0 0;'>@localhost_l1234_FS_WS</span>
<svg style="position:absolute;left:261.5px;top:614.5px;overflow:visible;" width="5" height="9" viewBox="0 0 5 9" fill="none"><path d="M0.5 0.5 L4.5 4.5 L0.5 8.5" stroke="#6C707E" stroke-width="1.15" stroke-linecap="round" stroke-linejoin="round"/></svg>
<svg style="position:absolute;left:276.7px;top:612px;overflow:visible;" width="15" height="13" viewBox="0 0 15 13" fill="none"><rect x="0.6" y="5.6" width="5.6" height="5.8" rx="0.8" fill="#E6E7EB" stroke="#6C707E" stroke-width="1.1"/><rect x="9.6" y="0.6" width="4.3" height="4.2" rx="0.8" stroke="#6C707E" stroke-width="1.1"/><rect x="9.6" y="7.2" width="4.3" height="4.2" rx="0.8" stroke="#6C707E" stroke-width="1.1"/><path d="M11.75 0.6 V4.8 M9.6 2.7 H13.9 M11.75 7.2 V11.4 M9.6 9.3 H13.9" stroke="#D5D7DD" stroke-width="0.6"/><path d="M3.4 5.6 V2.7 H9.6 M6.2 9.3 H9.6" stroke="#6C707E" stroke-width="1.1"/></svg>
<span style='position:absolute;left:296.1px;top:611.99px;font-family:"Liberation Sans", sans-serif;font-size:13px;line-height:13px;font-weight:normal;white-space:pre;color:#6C707E;transform:scaleX(0.9579);transform-origin:0 0;'>l1234_FS_WS</span>
<span style='position:absolute;left:830px;top:611.99px;font-family:"Liberation Sans", sans-serif;font-size:13px;line-height:13px;font-weight:normal;white-space:pre;color:#6C707E;transform:scaleX(1.0680);transform-origin:0 0;'>Indexing</span>
<div style="position:absolute;left:891px;top:616.5px;width:146px;height:4px;background:#DFE1E5;border-radius:2px"></div>
<div style="position:absolute;left:891px;top:616.5px;width:1.6px;height:4px;background:#3574F0;border-radius:1px"></div>
<svg style="position:absolute;left:1042.5px;top:611px;overflow:visible;" width="17" height="17" viewBox="0 0 17 17" fill="none"><circle cx="8.5" cy="8.5" r="8" fill="#D5D6DA"/><path d="M6.5 5.3 V11.7 M10.5 5.3 V11.7" stroke="#A9ACB6" stroke-width="1.7"/></svg>
<svg style="position:absolute;left:1074.5px;top:612.5px;overflow:visible;" width="15" height="14" viewBox="0 0 15 14" fill="none"><rect x="0.6" y="4.6" width="9.8" height="7.6" rx="1.4" stroke="#6C707E" stroke-width="1.1"/><path d="M7.5 4.6 V3 a2.5 2.5 0 0 1 5 0 V4.3" stroke="#6C707E" stroke-width="1.1"/><rect x="4.8" y="7.6" width="1.4" height="1.4" fill="#6C707E"/></svg>
<svg style="position:absolute;left:1105.5px;top:611.5px;overflow:visible;" width="15" height="17" viewBox="0 0 15 17" fill="none"><path d="M6.5 0.8 a4.2 4.2 0 0 1 4.2 4.2 V8.5 L12.4 11.6 H0.6 L2.3 8.5 V5 A4.2 4.2 0 0 1 6.5 0.8 Z" stroke="#6C707E" stroke-width="1.1" stroke-linejoin="round"/><path d="M4.8 13.3 H8.2 L6.5 14.6 Z" fill="#6C707E"/></svg>
</div></div>
<div style="position:absolute;left:0px;top:381px;width:1px;height:39px;background:#3c3c3e;"></div>
<div style="position:absolute;left:0px;top:79px;width:1px;height:1.5px;background:#555;"></div>
</div></body></html>
